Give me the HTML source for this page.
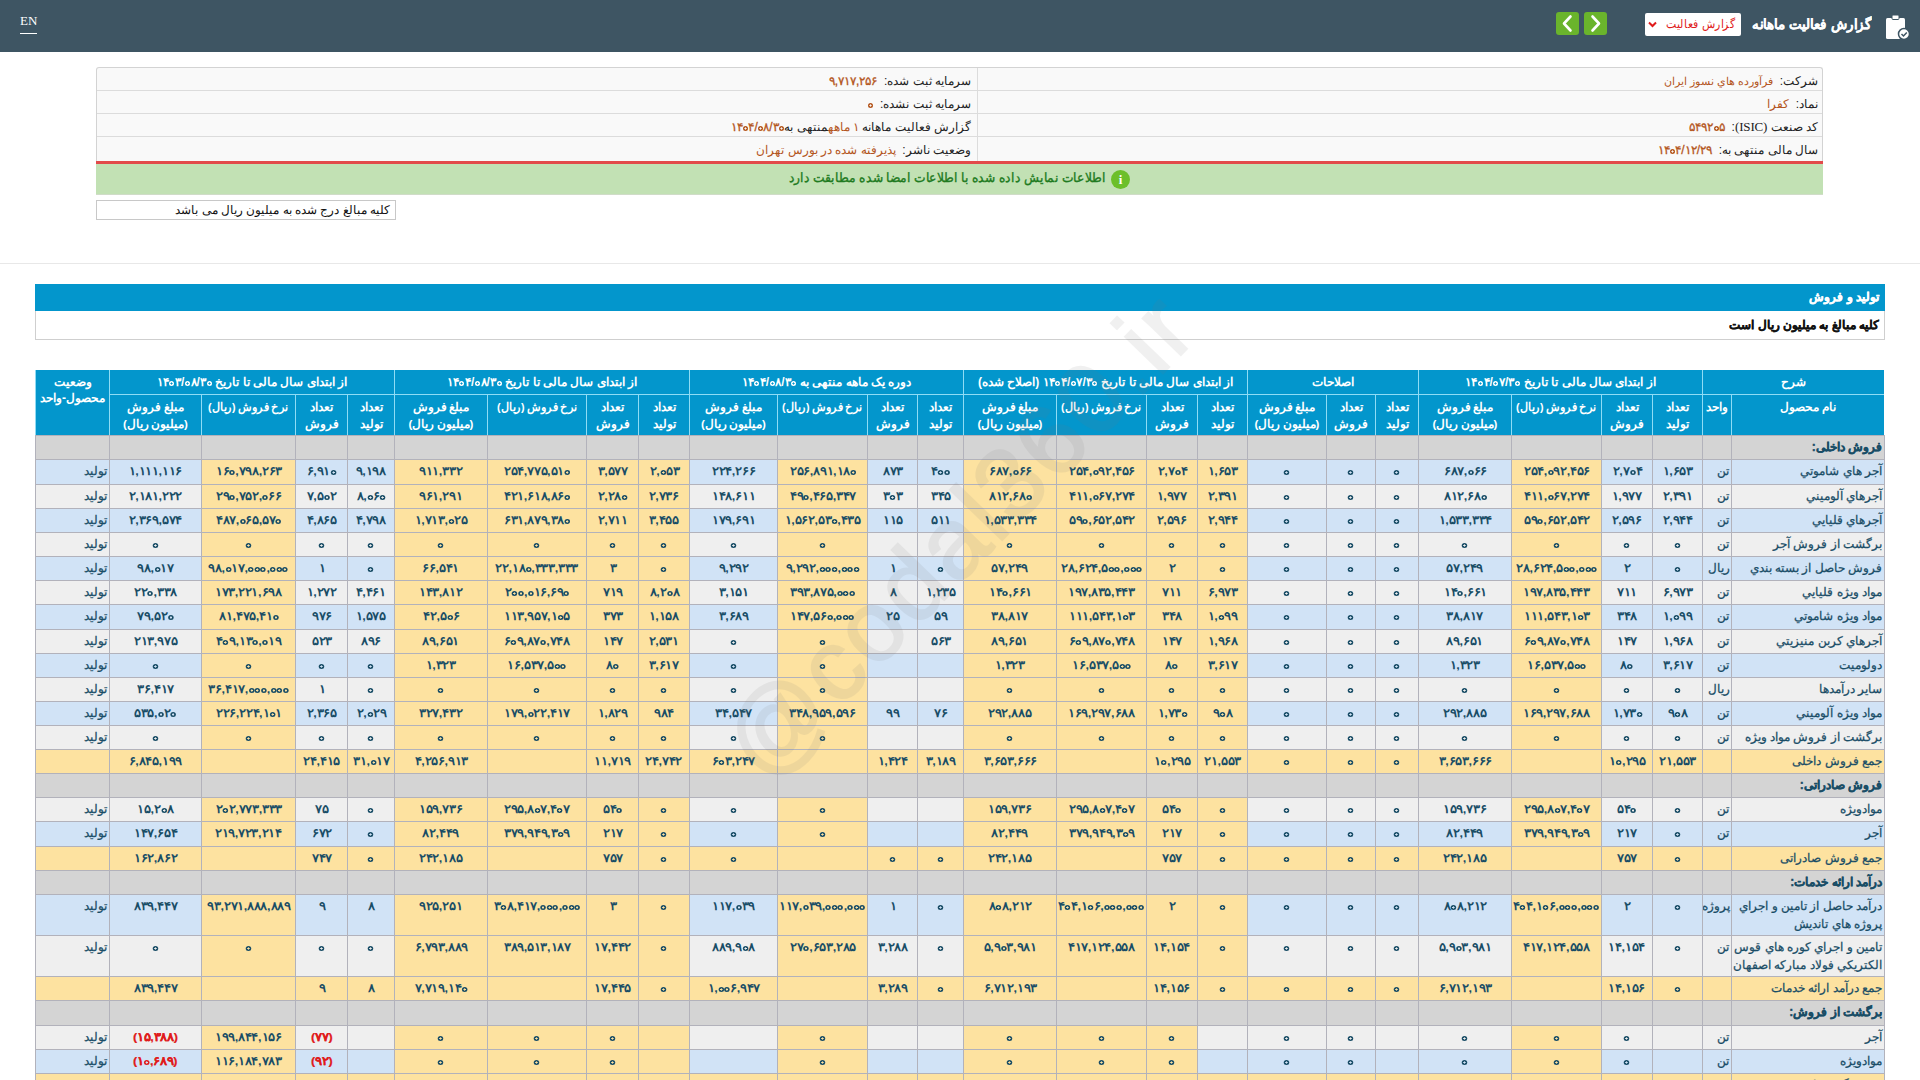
<!DOCTYPE html>
<html lang="fa">
<head>
<meta charset="utf-8">
<style>
*{box-sizing:border-box;margin:0;padding:0}
html,body{width:1920px;height:1080px;overflow:hidden;background:#fff;font-family:"Liberation Sans",sans-serif;}
.abs{position:absolute}
#top{position:absolute;left:0;top:0;width:1920px;height:52px;background:#3e5563}
#en{position:absolute;left:20px;top:14px;color:#fff;font-family:"Liberation Serif",serif;font-size:13px;line-height:14px}
#en:after{content:"";position:absolute;left:0;right:0;top:19px;height:1px;background:#fff}
.gbtn{position:absolute;top:12px;width:23px;height:23px;background:#6ab42c;border-radius:3px}
.gbtn svg{position:absolute;left:0;top:0}
#sel{position:absolute;left:1645px;top:13px;width:96px;height:23px;background:#fff;border-radius:2px;color:#e01b1b;font-size:11.5px;letter-spacing:-0.3px;line-height:23px;direction:rtl;padding-right:6px;white-space:nowrap}
#sel svg{position:absolute;left:3px;top:8px}
#ttl{position:absolute;right:48px;top:13px;color:#fff;font-size:14px;font-weight:bold;line-height:22px;direction:rtl;white-space:nowrap;transform:scaleX(0.953);transform-origin:100% 50%;-webkit-text-stroke:0.2px #fff}
#info{position:absolute;left:96px;top:67px;width:1727px;height:94px;background:#f9f9f9;border:1px solid #d3d3d3;border-bottom:none;border-radius:3px 3px 0 0}
.ir{position:absolute;left:0;width:1725px;height:1px;background:#dcdcdc}
.ivl{position:absolute;left:880px;top:0;width:1px;height:93px;background:#dcdcdc}
.it{position:absolute;direction:rtl;white-space:nowrap;font-size:12px;line-height:22px;color:#222;letter-spacing:-0.2px}
.it span{color:#b4561d}
.it .n{font-weight:normal;-webkit-text-stroke:0.3px currentColor;direction:ltr;unicode-bidi:bidi-override}
#redbar{position:absolute;left:96px;top:161px;width:1727px;height:3px;background:#e24a4a}
#alert{position:absolute;left:96px;top:164px;width:1727px;height:31px;background:#c2e1b4;border-bottom:1px solid #d0dcc8}
#alert .tx{position:absolute;right:717px;top:4px;direction:rtl;white-space:nowrap;color:#207a20;font-size:13px;transform:scaleX(0.942);transform-origin:100% 50%;font-weight:normal;-webkit-text-stroke:0.35px #207a20;line-height:20px}
#alert .ic{position:absolute;left:1015px;top:6px;width:19px;height:19px;border-radius:50%;background:#6cbf2a;color:#fff;font-size:13px;font-weight:bold;text-align:center;line-height:19px;font-family:"Liberation Serif",serif}
#note{position:absolute;left:96px;top:200px;width:300px;height:20px;border:1px solid #c8c8c8;background:#fff;direction:rtl;font-size:12px;line-height:19px;padding-right:5px;color:#111;white-space:nowrap}
#sep{position:absolute;left:0;top:263px;width:1920px;height:1px;background:#e8e8e8}
#sbar{position:absolute;left:35px;top:284px;width:1850px;height:27px;background:#0396cc;color:#fff;direction:rtl;font-size:12px;font-weight:bold;line-height:27px;padding-right:6px;-webkit-text-stroke:0.35px #fff}
#sbox{position:absolute;left:35px;top:311px;width:1850px;height:29px;background:#fff;border:1px solid #cfcfcf;border-top:none;direction:rtl;font-size:12px;font-weight:bold;line-height:28px;padding-right:5px;color:#111;-webkit-text-stroke:0.3px #111}
#tbl{position:absolute;left:0;top:0;width:1920px;height:1080px}
.h{position:absolute;background:#0396cc;border-left:1px solid #8fdcf5;border-top:1px solid #8fdcf5;color:#fff;font-weight:bold;font-size:12px;direction:rtl;text-align:center;white-space:nowrap;overflow:hidden;line-height:16px}
.h.g1{padding-top:4px;border-top:none}
.h.g2{padding-top:4px;border-top:none}
.h .ov,.it .n{unicode-bidi:bidi-override;direction:ltr}
.h i{display:inline-block;width:5px;height:5px;border-radius:50%;margin:0 0.6px;vertical-align:0.5px;background:radial-gradient(circle at center,rgba(0,0,0,0) 0.8px,#fff 1.3px)}
.h .nr{display:inline-block;transform:scaleX(0.93)}
.h.g3{padding-top:4px;font-size:11.5px;word-spacing:-1px;letter-spacing:-0.2px;line-height:16.5px}
.c{position:absolute;border-left:1px solid #b2b2bb;border-top:1px solid #b2b2bb;font-size:12px;direction:rtl;white-space:nowrap;overflow:hidden;color:#194d66;line-height:17px;padding-top:3px;font-weight:bold;text-align:center}
.c.nm{text-align:right;padding-right:2px;font-weight:normal;white-space:normal;line-height:18px;padding-top:2px;-webkit-text-stroke:0.25px currentColor}
.c.sb{font-weight:bold;-webkit-text-stroke:0.35px currentColor}
.c.un,.c.st{text-align:right;padding-right:2px;font-weight:normal;padding-top:3px;-webkit-text-stroke:0.25px currentColor}
.c.neg{color:#e01b1b;font-weight:normal;-webkit-text-stroke:0.2px currentColor}
.c.sm{letter-spacing:-0.6px;padding-right:1px}
.c.nu{direction:ltr;font-size:11.5px}
.c.nu b{display:inline-block;transform:scaleX(1.1)}
.c i,.it i{display:inline-block;width:5px;height:5px;border-radius:50%;margin:0 0.3px;vertical-align:0.5px;background:radial-gradient(circle at center,rgba(0,0,0,0) 0.8px,currentColor 1.3px)}
#tframe{position:absolute;left:35px;top:435px;width:1850px;height:720px;border-right:1px solid #b2b2bb;pointer-events:none}
#wm{position:absolute;left:645px;top:480px;font-size:100px;font-weight:normal;color:#787878;-webkit-text-stroke:2px #787878;opacity:0.1;letter-spacing:3px;transform:rotate(-46deg);white-space:nowrap;font-family:"Liberation Sans",sans-serif;line-height:110px}
</style>
</head>
<body>
<div id="top">
  <div id="en">EN</div>
  <div class="gbtn" style="left:1556px"><svg width="23" height="23" viewBox="0 0 23 23"><path d="M14.5 4.5 L8 11.5 L14.5 18.5" fill="none" stroke="#fff" stroke-width="2.6" stroke-linecap="round" stroke-linejoin="round"/></svg></div>
  <div class="gbtn" style="left:1584px"><svg width="23" height="23" viewBox="0 0 23 23"><path d="M8.5 4.5 L15 11.5 L8.5 18.5" fill="none" stroke="#fff" stroke-width="2.6" stroke-linecap="round" stroke-linejoin="round"/></svg></div>
  <div id="sel"><span style="display:inline-block;transform:scaleX(0.91);transform-origin:100% 50%">گزارش فعالیت</span><svg width="9" height="7" viewBox="0 0 9 7"><path d="M1 1.5 L4.5 5 L8 1.5" fill="none" stroke="#e01b1b" stroke-width="2"/></svg></div>
  <div id="ttl">گزارش فعالیت ماهانه</div>
  <svg class="abs" style="left:1884px;top:14px" width="26" height="26" viewBox="0 0 26 26">
    <rect x="2" y="4" width="19" height="21" rx="1.5" fill="#fff"/>
    <rect x="8" y="1" width="7" height="4.5" rx="1" fill="#fff" stroke="#3e5563" stroke-width="1"/>
    <circle cx="20" cy="20" r="5.5" fill="#fff" stroke="#3e5563" stroke-width="1.5"/>
    <path d="M17.5 20 L19.5 22 L22.8 18.5" fill="none" stroke="#3e5563" stroke-width="1.5"/>
  </svg>
</div>

<div id="info">
  <div class="ir" style="top:22px"></div>
  <div class="ir" style="top:45px"></div>
  <div class="ir" style="top:68px"></div>
  <div class="ivl"></div>
  <div class="it" style="right:4px;top:2px">شرکت:&nbsp; <span style="font-size:11px">فرآورده هاي نسوز ايران</span></div>
  <div class="it" style="right:4px;top:25px">نماد:&nbsp; <span>كفرا</span></div>
  <div class="it" style="right:4px;top:48px">کد صنعت <b style="font-family:'Liberation Serif',serif;font-weight:normal;font-size:13px">(ISIC)</b>:&nbsp; <span class="n">۵۴۹۲<i></i>۵</span></div>
  <div class="it" style="right:4px;top:71px">سال مالی منتهی به:&nbsp; <span class="n">۱۴<i></i>۴/۱۲/۲۹</span></div>
  <div class="it" style="right:851px;top:2px">سرمایه ثبت شده:&nbsp; <span class="n">۹,۷۱۷,۲۵۶</span></div>
  <div class="it" style="right:851px;top:25px">سرمایه ثبت نشده:&nbsp; <span class="n"><i></i></span></div>
  <div class="it" style="right:851px;top:48px">گزارش فعالیت ماهانه <span>۱ ماهه</span>منتهی به<span class="n">۱۴<i></i>۴/<i></i>۸/۳<i></i></span></div>
  <div class="it" style="right:851px;top:71px">وضعیت ناشر:&nbsp; <span>پذیرفته شده در بورس تهران</span></div>
</div>
<div id="redbar"></div>
<div id="alert"><div class="tx">اطلاعات نمایش داده شده با اطلاعات امضا شده مطابقت دارد</div><div class="ic">i</div></div>
<div id="note">کلیه مبالغ درج شده به میلیون ریال می باشد</div>
<div id="sep"></div>
<div id="sbar">تولید و فروش</div>
<div id="sbox">کلیه مبالغ به میلیون ریال است</div>

<div id="tbl">
<div class="h g1" style="left:1702px;top:370px;width:182px;height:24px">شرح</div>
<div class="h g1" style="left:1418px;top:370px;width:284px;height:24px">از ابتدای سال مالی تا تاریخ <span class="ov">۱۴<i></i>۴/<i></i>۷/۳<i></i></span></div>
<div class="h g1" style="left:1247px;top:370px;width:171px;height:24px">اصلاحات</div>
<div class="h g1" style="left:963px;top:370px;width:284px;height:24px">از ابتدای سال مالی تا تاریخ <span class="ov">۱۴<i></i>۴/<i></i>۷/۳<i></i></span> (اصلاح شده)</div>
<div class="h g1" style="left:689px;top:370px;width:274px;height:24px">دوره یک ماهه منتهی به <span class="ov">۱۴<i></i>۴/<i></i>۸/۳<i></i></span></div>
<div class="h g1" style="left:394px;top:370px;width:295px;height:24px">از ابتدای سال مالی تا تاریخ <span class="ov">۱۴<i></i>۴/<i></i>۸/۳<i></i></span></div>
<div class="h g1" style="left:109px;top:370px;width:285px;height:24px">از ابتدای سال مالی تا تاریخ <span class="ov">۱۴<i></i>۳/<i></i>۸/۳<i></i></span></div>
<div class="h g2" style="left:35px;top:370px;width:74px;height:65px">وضعیت<br>محصول-واحد</div>
<div class="h g3" style="left:1731px;top:394px;width:153px;height:41px">نام محصول</div>
<div class="h g3" style="left:1702px;top:394px;width:29px;height:41px">واحد</div>
<div class="h g3" style="left:1652px;top:394px;width:50px;height:41px">تعداد<br>تولید</div>
<div class="h g3" style="left:1601px;top:394px;width:51px;height:41px">تعداد<br>فروش</div>
<div class="h g3" style="left:1511px;top:394px;width:90px;height:41px"><span class="nr">نرخ فروش (ریال)</span></div>
<div class="h g3" style="left:1418px;top:394px;width:93px;height:41px">مبلغ فروش<br>(میلیون ریال)</div>
<div class="h g3" style="left:1375px;top:394px;width:43px;height:41px">تعداد<br>تولید</div>
<div class="h g3" style="left:1326px;top:394px;width:49px;height:41px">تعداد<br>فروش</div>
<div class="h g3" style="left:1247px;top:394px;width:79px;height:41px">مبلغ فروش<br>(میلیون ریال)</div>
<div class="h g3" style="left:1197px;top:394px;width:50px;height:41px">تعداد<br>تولید</div>
<div class="h g3" style="left:1146px;top:394px;width:51px;height:41px">تعداد<br>فروش</div>
<div class="h g3" style="left:1056px;top:394px;width:90px;height:41px"><span class="nr">نرخ فروش (ریال)</span></div>
<div class="h g3" style="left:963px;top:394px;width:93px;height:41px">مبلغ فروش<br>(میلیون ریال)</div>
<div class="h g3" style="left:917px;top:394px;width:46px;height:41px">تعداد<br>تولید</div>
<div class="h g3" style="left:867px;top:394px;width:50px;height:41px">تعداد<br>فروش</div>
<div class="h g3" style="left:777px;top:394px;width:90px;height:41px"><span class="nr">نرخ فروش (ریال)</span></div>
<div class="h g3" style="left:689px;top:394px;width:88px;height:41px">مبلغ فروش<br>(میلیون ریال)</div>
<div class="h g3" style="left:638px;top:394px;width:51px;height:41px">تعداد<br>تولید</div>
<div class="h g3" style="left:586px;top:394px;width:52px;height:41px">تعداد<br>فروش</div>
<div class="h g3" style="left:487px;top:394px;width:99px;height:41px"><span class="nr">نرخ فروش (ریال)</span></div>
<div class="h g3" style="left:394px;top:394px;width:93px;height:41px">مبلغ فروش<br>(میلیون ریال)</div>
<div class="h g3" style="left:347px;top:394px;width:47px;height:41px">تعداد<br>تولید</div>
<div class="h g3" style="left:295px;top:394px;width:52px;height:41px">تعداد<br>فروش</div>
<div class="h g3" style="left:201px;top:394px;width:94px;height:41px"><span class="nr">نرخ فروش (ریال)</span></div>
<div class="h g3" style="left:109px;top:394px;width:92px;height:41px">مبلغ فروش<br>(میلیون ریال)</div>
<div class="c nm sb" style="left:1731px;top:435px;width:153px;height:24px;background:#d4d4d4">فروش داخلی:</div>
<div class="c " style="left:1702px;top:435px;width:29px;height:24px;background:#d4d4d4"></div>
<div class="c " style="left:1652px;top:435px;width:50px;height:24px;background:#d4d4d4"></div>
<div class="c " style="left:1601px;top:435px;width:51px;height:24px;background:#d4d4d4"></div>
<div class="c " style="left:1511px;top:435px;width:90px;height:24px;background:#d4d4d4"></div>
<div class="c " style="left:1418px;top:435px;width:93px;height:24px;background:#d4d4d4"></div>
<div class="c " style="left:1375px;top:435px;width:43px;height:24px;background:#d4d4d4"></div>
<div class="c " style="left:1326px;top:435px;width:49px;height:24px;background:#d4d4d4"></div>
<div class="c " style="left:1247px;top:435px;width:79px;height:24px;background:#d4d4d4"></div>
<div class="c " style="left:1197px;top:435px;width:50px;height:24px;background:#d4d4d4"></div>
<div class="c " style="left:1146px;top:435px;width:51px;height:24px;background:#d4d4d4"></div>
<div class="c " style="left:1056px;top:435px;width:90px;height:24px;background:#d4d4d4"></div>
<div class="c " style="left:963px;top:435px;width:93px;height:24px;background:#d4d4d4"></div>
<div class="c " style="left:917px;top:435px;width:46px;height:24px;background:#d4d4d4"></div>
<div class="c " style="left:867px;top:435px;width:50px;height:24px;background:#d4d4d4"></div>
<div class="c " style="left:777px;top:435px;width:90px;height:24px;background:#d4d4d4"></div>
<div class="c " style="left:689px;top:435px;width:88px;height:24px;background:#d4d4d4"></div>
<div class="c " style="left:638px;top:435px;width:51px;height:24px;background:#d4d4d4"></div>
<div class="c " style="left:586px;top:435px;width:52px;height:24px;background:#d4d4d4"></div>
<div class="c " style="left:487px;top:435px;width:99px;height:24px;background:#d4d4d4"></div>
<div class="c " style="left:394px;top:435px;width:93px;height:24px;background:#d4d4d4"></div>
<div class="c " style="left:347px;top:435px;width:47px;height:24px;background:#d4d4d4"></div>
<div class="c " style="left:295px;top:435px;width:52px;height:24px;background:#d4d4d4"></div>
<div class="c " style="left:201px;top:435px;width:94px;height:24px;background:#d4d4d4"></div>
<div class="c " style="left:109px;top:435px;width:92px;height:24px;background:#d4d4d4"></div>
<div class="c " style="left:35px;top:435px;width:74px;height:24px;background:#d4d4d4"></div>
<div class="c nm" style="left:1731px;top:459px;width:153px;height:25px;background:#d1e3f6">آجر هاي شاموتي</div>
<div class="c un" style="left:1702px;top:459px;width:29px;height:25px;background:#d1e3f6">تن</div>
<div class="c nu" style="left:1652px;top:459px;width:50px;height:25px;background:#d1e3f6"><b>۱,۶۵۳</b></div>
<div class="c nu" style="left:1601px;top:459px;width:51px;height:25px;background:#d1e3f6"><b>۲,۷<i></i>۴</b></div>
<div class="c nu" style="left:1511px;top:459px;width:90px;height:25px;background:#fde2a0"><b>۲۵۴,<i></i>۹۲,۴۵۶</b></div>
<div class="c nu" style="left:1418px;top:459px;width:93px;height:25px;background:#d1e3f6"><b>۶۸۷,<i></i>۶۶</b></div>
<div class="c nu" style="left:1375px;top:459px;width:43px;height:25px;background:#d1e3f6"><b><i></i></b></div>
<div class="c nu" style="left:1326px;top:459px;width:49px;height:25px;background:#d1e3f6"><b><i></i></b></div>
<div class="c nu" style="left:1247px;top:459px;width:79px;height:25px;background:#d1e3f6"><b><i></i></b></div>
<div class="c nu" style="left:1197px;top:459px;width:50px;height:25px;background:#fde2a0"><b>۱,۶۵۳</b></div>
<div class="c nu" style="left:1146px;top:459px;width:51px;height:25px;background:#fde2a0"><b>۲,۷<i></i>۴</b></div>
<div class="c nu" style="left:1056px;top:459px;width:90px;height:25px;background:#fde2a0"><b>۲۵۴,<i></i>۹۲,۴۵۶</b></div>
<div class="c nu" style="left:963px;top:459px;width:93px;height:25px;background:#fde2a0"><b>۶۸۷,<i></i>۶۶</b></div>
<div class="c nu" style="left:917px;top:459px;width:46px;height:25px;background:#d1e3f6"><b>۴<i></i><i></i></b></div>
<div class="c nu" style="left:867px;top:459px;width:50px;height:25px;background:#d1e3f6"><b>۸۷۳</b></div>
<div class="c nu" style="left:777px;top:459px;width:90px;height:25px;background:#fde2a0"><b>۲۵۶,۸۹۱,۱۸<i></i></b></div>
<div class="c nu" style="left:689px;top:459px;width:88px;height:25px;background:#d1e3f6"><b>۲۲۴,۲۶۶</b></div>
<div class="c nu" style="left:638px;top:459px;width:51px;height:25px;background:#fde2a0"><b>۲,<i></i>۵۳</b></div>
<div class="c nu" style="left:586px;top:459px;width:52px;height:25px;background:#fde2a0"><b>۳,۵۷۷</b></div>
<div class="c nu" style="left:487px;top:459px;width:99px;height:25px;background:#fde2a0"><b>۲۵۴,۷۷۵,۵۱<i></i></b></div>
<div class="c nu" style="left:394px;top:459px;width:93px;height:25px;background:#fde2a0"><b>۹۱۱,۳۳۲</b></div>
<div class="c nu" style="left:347px;top:459px;width:47px;height:25px;background:#d1e3f6"><b>۹,۱۹۸</b></div>
<div class="c nu" style="left:295px;top:459px;width:52px;height:25px;background:#d1e3f6"><b>۶,۹۱<i></i></b></div>
<div class="c nu" style="left:201px;top:459px;width:94px;height:25px;background:#fde2a0"><b>۱۶<i></i>,۷۹۸,۲۶۳</b></div>
<div class="c nu" style="left:109px;top:459px;width:92px;height:25px;background:#d1e3f6"><b>۱,۱۱۱,۱۱۶</b></div>
<div class="c st" style="left:35px;top:459px;width:74px;height:25px;background:#d1e3f6">تولید</div>
<div class="c nm" style="left:1731px;top:484px;width:153px;height:24px;background:#efefef">آجرهاي آلوميني</div>
<div class="c un" style="left:1702px;top:484px;width:29px;height:24px;background:#efefef">تن</div>
<div class="c nu" style="left:1652px;top:484px;width:50px;height:24px;background:#efefef"><b>۲,۳۹۱</b></div>
<div class="c nu" style="left:1601px;top:484px;width:51px;height:24px;background:#efefef"><b>۱,۹۷۷</b></div>
<div class="c nu" style="left:1511px;top:484px;width:90px;height:24px;background:#fde2a0"><b>۴۱۱,<i></i>۶۷,۲۷۴</b></div>
<div class="c nu" style="left:1418px;top:484px;width:93px;height:24px;background:#efefef"><b>۸۱۲,۶۸<i></i></b></div>
<div class="c nu" style="left:1375px;top:484px;width:43px;height:24px;background:#efefef"><b><i></i></b></div>
<div class="c nu" style="left:1326px;top:484px;width:49px;height:24px;background:#efefef"><b><i></i></b></div>
<div class="c nu" style="left:1247px;top:484px;width:79px;height:24px;background:#efefef"><b><i></i></b></div>
<div class="c nu" style="left:1197px;top:484px;width:50px;height:24px;background:#fde2a0"><b>۲,۳۹۱</b></div>
<div class="c nu" style="left:1146px;top:484px;width:51px;height:24px;background:#fde2a0"><b>۱,۹۷۷</b></div>
<div class="c nu" style="left:1056px;top:484px;width:90px;height:24px;background:#fde2a0"><b>۴۱۱,<i></i>۶۷,۲۷۴</b></div>
<div class="c nu" style="left:963px;top:484px;width:93px;height:24px;background:#fde2a0"><b>۸۱۲,۶۸<i></i></b></div>
<div class="c nu" style="left:917px;top:484px;width:46px;height:24px;background:#efefef"><b>۳۴۵</b></div>
<div class="c nu" style="left:867px;top:484px;width:50px;height:24px;background:#efefef"><b>۳<i></i>۳</b></div>
<div class="c nu" style="left:777px;top:484px;width:90px;height:24px;background:#fde2a0"><b>۴۹<i></i>,۴۶۵,۳۴۷</b></div>
<div class="c nu" style="left:689px;top:484px;width:88px;height:24px;background:#efefef"><b>۱۴۸,۶۱۱</b></div>
<div class="c nu" style="left:638px;top:484px;width:51px;height:24px;background:#fde2a0"><b>۲,۷۳۶</b></div>
<div class="c nu" style="left:586px;top:484px;width:52px;height:24px;background:#fde2a0"><b>۲,۲۸<i></i></b></div>
<div class="c nu" style="left:487px;top:484px;width:99px;height:24px;background:#fde2a0"><b>۴۲۱,۶۱۸,۸۶<i></i></b></div>
<div class="c nu" style="left:394px;top:484px;width:93px;height:24px;background:#fde2a0"><b>۹۶۱,۲۹۱</b></div>
<div class="c nu" style="left:347px;top:484px;width:47px;height:24px;background:#efefef"><b>۸,<i></i>۶<i></i></b></div>
<div class="c nu" style="left:295px;top:484px;width:52px;height:24px;background:#efefef"><b>۷,۵<i></i>۲</b></div>
<div class="c nu" style="left:201px;top:484px;width:94px;height:24px;background:#fde2a0"><b>۲۹<i></i>,۷۵۲,<i></i>۶۶</b></div>
<div class="c nu" style="left:109px;top:484px;width:92px;height:24px;background:#efefef"><b>۲,۱۸۱,۲۲۲</b></div>
<div class="c st" style="left:35px;top:484px;width:74px;height:24px;background:#efefef">تولید</div>
<div class="c nm" style="left:1731px;top:508px;width:153px;height:24px;background:#d1e3f6">آجرهاي قليايي</div>
<div class="c un" style="left:1702px;top:508px;width:29px;height:24px;background:#d1e3f6">تن</div>
<div class="c nu" style="left:1652px;top:508px;width:50px;height:24px;background:#d1e3f6"><b>۲,۹۴۴</b></div>
<div class="c nu" style="left:1601px;top:508px;width:51px;height:24px;background:#d1e3f6"><b>۲,۵۹۶</b></div>
<div class="c nu" style="left:1511px;top:508px;width:90px;height:24px;background:#fde2a0"><b>۵۹<i></i>,۶۵۲,۵۴۲</b></div>
<div class="c nu" style="left:1418px;top:508px;width:93px;height:24px;background:#d1e3f6"><b>۱,۵۳۳,۳۳۴</b></div>
<div class="c nu" style="left:1375px;top:508px;width:43px;height:24px;background:#d1e3f6"><b><i></i></b></div>
<div class="c nu" style="left:1326px;top:508px;width:49px;height:24px;background:#d1e3f6"><b><i></i></b></div>
<div class="c nu" style="left:1247px;top:508px;width:79px;height:24px;background:#d1e3f6"><b><i></i></b></div>
<div class="c nu" style="left:1197px;top:508px;width:50px;height:24px;background:#fde2a0"><b>۲,۹۴۴</b></div>
<div class="c nu" style="left:1146px;top:508px;width:51px;height:24px;background:#fde2a0"><b>۲,۵۹۶</b></div>
<div class="c nu" style="left:1056px;top:508px;width:90px;height:24px;background:#fde2a0"><b>۵۹<i></i>,۶۵۲,۵۴۲</b></div>
<div class="c nu" style="left:963px;top:508px;width:93px;height:24px;background:#fde2a0"><b>۱,۵۳۳,۳۳۴</b></div>
<div class="c nu" style="left:917px;top:508px;width:46px;height:24px;background:#d1e3f6"><b>۵۱۱</b></div>
<div class="c nu" style="left:867px;top:508px;width:50px;height:24px;background:#d1e3f6"><b>۱۱۵</b></div>
<div class="c nu" style="left:777px;top:508px;width:90px;height:24px;background:#fde2a0"><b>۱,۵۶۲,۵۳<i></i>,۴۳۵</b></div>
<div class="c nu" style="left:689px;top:508px;width:88px;height:24px;background:#d1e3f6"><b>۱۷۹,۶۹۱</b></div>
<div class="c nu" style="left:638px;top:508px;width:51px;height:24px;background:#fde2a0"><b>۳,۴۵۵</b></div>
<div class="c nu" style="left:586px;top:508px;width:52px;height:24px;background:#fde2a0"><b>۲,۷۱۱</b></div>
<div class="c nu" style="left:487px;top:508px;width:99px;height:24px;background:#fde2a0"><b>۶۳۱,۸۷۹,۳۸<i></i></b></div>
<div class="c nu" style="left:394px;top:508px;width:93px;height:24px;background:#fde2a0"><b>۱,۷۱۳,<i></i>۲۵</b></div>
<div class="c nu" style="left:347px;top:508px;width:47px;height:24px;background:#d1e3f6"><b>۴,۷۹۸</b></div>
<div class="c nu" style="left:295px;top:508px;width:52px;height:24px;background:#d1e3f6"><b>۴,۸۶۵</b></div>
<div class="c nu" style="left:201px;top:508px;width:94px;height:24px;background:#fde2a0"><b>۴۸۷,<i></i>۶۵,۵۷<i></i></b></div>
<div class="c nu" style="left:109px;top:508px;width:92px;height:24px;background:#d1e3f6"><b>۲,۳۶۹,۵۷۴</b></div>
<div class="c st" style="left:35px;top:508px;width:74px;height:24px;background:#d1e3f6">تولید</div>
<div class="c nm" style="left:1731px;top:532px;width:153px;height:24px;background:#efefef">برگشت از فروش آجر</div>
<div class="c un" style="left:1702px;top:532px;width:29px;height:24px;background:#efefef">تن</div>
<div class="c nu" style="left:1652px;top:532px;width:50px;height:24px;background:#efefef"><b><i></i></b></div>
<div class="c nu" style="left:1601px;top:532px;width:51px;height:24px;background:#efefef"><b><i></i></b></div>
<div class="c nu" style="left:1511px;top:532px;width:90px;height:24px;background:#fde2a0"><b><i></i></b></div>
<div class="c nu" style="left:1418px;top:532px;width:93px;height:24px;background:#efefef"><b><i></i></b></div>
<div class="c nu" style="left:1375px;top:532px;width:43px;height:24px;background:#efefef"><b><i></i></b></div>
<div class="c nu" style="left:1326px;top:532px;width:49px;height:24px;background:#efefef"><b><i></i></b></div>
<div class="c nu" style="left:1247px;top:532px;width:79px;height:24px;background:#efefef"><b><i></i></b></div>
<div class="c nu" style="left:1197px;top:532px;width:50px;height:24px;background:#fde2a0"><b><i></i></b></div>
<div class="c nu" style="left:1146px;top:532px;width:51px;height:24px;background:#fde2a0"><b><i></i></b></div>
<div class="c nu" style="left:1056px;top:532px;width:90px;height:24px;background:#fde2a0"><b><i></i></b></div>
<div class="c nu" style="left:963px;top:532px;width:93px;height:24px;background:#fde2a0"><b><i></i></b></div>
<div class="c nu" style="left:917px;top:532px;width:46px;height:24px;background:#efefef"></div>
<div class="c nu" style="left:867px;top:532px;width:50px;height:24px;background:#efefef"></div>
<div class="c nu" style="left:777px;top:532px;width:90px;height:24px;background:#fde2a0"><b><i></i></b></div>
<div class="c nu" style="left:689px;top:532px;width:88px;height:24px;background:#efefef"><b><i></i></b></div>
<div class="c nu" style="left:638px;top:532px;width:51px;height:24px;background:#fde2a0"><b><i></i></b></div>
<div class="c nu" style="left:586px;top:532px;width:52px;height:24px;background:#fde2a0"><b><i></i></b></div>
<div class="c nu" style="left:487px;top:532px;width:99px;height:24px;background:#fde2a0"><b><i></i></b></div>
<div class="c nu" style="left:394px;top:532px;width:93px;height:24px;background:#fde2a0"><b><i></i></b></div>
<div class="c nu" style="left:347px;top:532px;width:47px;height:24px;background:#efefef"><b><i></i></b></div>
<div class="c nu" style="left:295px;top:532px;width:52px;height:24px;background:#efefef"><b><i></i></b></div>
<div class="c nu" style="left:201px;top:532px;width:94px;height:24px;background:#fde2a0"><b><i></i></b></div>
<div class="c nu" style="left:109px;top:532px;width:92px;height:24px;background:#efefef"><b><i></i></b></div>
<div class="c st" style="left:35px;top:532px;width:74px;height:24px;background:#efefef">تولید</div>
<div class="c nm" style="left:1731px;top:556px;width:153px;height:24px;background:#d1e3f6">فروش حاصل از بسته بندي</div>
<div class="c un sm" style="left:1702px;top:556px;width:29px;height:24px;background:#d1e3f6">ريال</div>
<div class="c nu" style="left:1652px;top:556px;width:50px;height:24px;background:#d1e3f6"><b><i></i></b></div>
<div class="c nu" style="left:1601px;top:556px;width:51px;height:24px;background:#d1e3f6"><b>۲</b></div>
<div class="c nu" style="left:1511px;top:556px;width:90px;height:24px;background:#fde2a0"><b>۲۸,۶۲۴,۵<i></i><i></i>,<i></i><i></i><i></i></b></div>
<div class="c nu" style="left:1418px;top:556px;width:93px;height:24px;background:#d1e3f6"><b>۵۷,۲۴۹</b></div>
<div class="c nu" style="left:1375px;top:556px;width:43px;height:24px;background:#d1e3f6"><b><i></i></b></div>
<div class="c nu" style="left:1326px;top:556px;width:49px;height:24px;background:#d1e3f6"><b><i></i></b></div>
<div class="c nu" style="left:1247px;top:556px;width:79px;height:24px;background:#d1e3f6"><b><i></i></b></div>
<div class="c nu" style="left:1197px;top:556px;width:50px;height:24px;background:#fde2a0"><b><i></i></b></div>
<div class="c nu" style="left:1146px;top:556px;width:51px;height:24px;background:#fde2a0"><b>۲</b></div>
<div class="c nu" style="left:1056px;top:556px;width:90px;height:24px;background:#fde2a0"><b>۲۸,۶۲۴,۵<i></i><i></i>,<i></i><i></i><i></i></b></div>
<div class="c nu" style="left:963px;top:556px;width:93px;height:24px;background:#fde2a0"><b>۵۷,۲۴۹</b></div>
<div class="c nu" style="left:917px;top:556px;width:46px;height:24px;background:#d1e3f6"><b><i></i></b></div>
<div class="c nu" style="left:867px;top:556px;width:50px;height:24px;background:#d1e3f6"><b>۱</b></div>
<div class="c nu" style="left:777px;top:556px;width:90px;height:24px;background:#fde2a0"><b>۹,۲۹۲,<i></i><i></i><i></i>,<i></i><i></i><i></i></b></div>
<div class="c nu" style="left:689px;top:556px;width:88px;height:24px;background:#d1e3f6"><b>۹,۲۹۲</b></div>
<div class="c nu" style="left:638px;top:556px;width:51px;height:24px;background:#fde2a0"><b><i></i></b></div>
<div class="c nu" style="left:586px;top:556px;width:52px;height:24px;background:#fde2a0"><b>۳</b></div>
<div class="c nu" style="left:487px;top:556px;width:99px;height:24px;background:#fde2a0"><b>۲۲,۱۸<i></i>,۳۳۳,۳۳۳</b></div>
<div class="c nu" style="left:394px;top:556px;width:93px;height:24px;background:#fde2a0"><b>۶۶,۵۴۱</b></div>
<div class="c nu" style="left:347px;top:556px;width:47px;height:24px;background:#d1e3f6"><b><i></i></b></div>
<div class="c nu" style="left:295px;top:556px;width:52px;height:24px;background:#d1e3f6"><b>۱</b></div>
<div class="c nu" style="left:201px;top:556px;width:94px;height:24px;background:#fde2a0"><b>۹۸,<i></i>۱۷,<i></i><i></i><i></i>,<i></i><i></i><i></i></b></div>
<div class="c nu" style="left:109px;top:556px;width:92px;height:24px;background:#d1e3f6"><b>۹۸,<i></i>۱۷</b></div>
<div class="c st" style="left:35px;top:556px;width:74px;height:24px;background:#d1e3f6">تولید</div>
<div class="c nm" style="left:1731px;top:580px;width:153px;height:24px;background:#efefef">مواد ويژه قليايي</div>
<div class="c un" style="left:1702px;top:580px;width:29px;height:24px;background:#efefef">تن</div>
<div class="c nu" style="left:1652px;top:580px;width:50px;height:24px;background:#efefef"><b>۶,۹۷۳</b></div>
<div class="c nu" style="left:1601px;top:580px;width:51px;height:24px;background:#efefef"><b>۷۱۱</b></div>
<div class="c nu" style="left:1511px;top:580px;width:90px;height:24px;background:#fde2a0"><b>۱۹۷,۸۳۵,۴۴۳</b></div>
<div class="c nu" style="left:1418px;top:580px;width:93px;height:24px;background:#efefef"><b>۱۴<i></i>,۶۶۱</b></div>
<div class="c nu" style="left:1375px;top:580px;width:43px;height:24px;background:#efefef"><b><i></i></b></div>
<div class="c nu" style="left:1326px;top:580px;width:49px;height:24px;background:#efefef"><b><i></i></b></div>
<div class="c nu" style="left:1247px;top:580px;width:79px;height:24px;background:#efefef"><b><i></i></b></div>
<div class="c nu" style="left:1197px;top:580px;width:50px;height:24px;background:#fde2a0"><b>۶,۹۷۳</b></div>
<div class="c nu" style="left:1146px;top:580px;width:51px;height:24px;background:#fde2a0"><b>۷۱۱</b></div>
<div class="c nu" style="left:1056px;top:580px;width:90px;height:24px;background:#fde2a0"><b>۱۹۷,۸۳۵,۴۴۳</b></div>
<div class="c nu" style="left:963px;top:580px;width:93px;height:24px;background:#fde2a0"><b>۱۴<i></i>,۶۶۱</b></div>
<div class="c nu" style="left:917px;top:580px;width:46px;height:24px;background:#efefef"><b>۱,۲۳۵</b></div>
<div class="c nu" style="left:867px;top:580px;width:50px;height:24px;background:#efefef"><b>۸</b></div>
<div class="c nu" style="left:777px;top:580px;width:90px;height:24px;background:#fde2a0"><b>۳۹۳,۸۷۵,<i></i><i></i><i></i></b></div>
<div class="c nu" style="left:689px;top:580px;width:88px;height:24px;background:#efefef"><b>۳,۱۵۱</b></div>
<div class="c nu" style="left:638px;top:580px;width:51px;height:24px;background:#fde2a0"><b>۸,۲<i></i>۸</b></div>
<div class="c nu" style="left:586px;top:580px;width:52px;height:24px;background:#fde2a0"><b>۷۱۹</b></div>
<div class="c nu" style="left:487px;top:580px;width:99px;height:24px;background:#fde2a0"><b>۲<i></i><i></i>,<i></i>۱۶,۶۹<i></i></b></div>
<div class="c nu" style="left:394px;top:580px;width:93px;height:24px;background:#fde2a0"><b>۱۴۳,۸۱۲</b></div>
<div class="c nu" style="left:347px;top:580px;width:47px;height:24px;background:#efefef"><b>۴,۴۶۱</b></div>
<div class="c nu" style="left:295px;top:580px;width:52px;height:24px;background:#efefef"><b>۱,۲۷۲</b></div>
<div class="c nu" style="left:201px;top:580px;width:94px;height:24px;background:#fde2a0"><b>۱۷۳,۲۲۱,۶۹۸</b></div>
<div class="c nu" style="left:109px;top:580px;width:92px;height:24px;background:#efefef"><b>۲۲<i></i>,۳۳۸</b></div>
<div class="c st" style="left:35px;top:580px;width:74px;height:24px;background:#efefef">تولید</div>
<div class="c nm" style="left:1731px;top:604px;width:153px;height:25px;background:#d1e3f6">مواد ويژه شاموتي</div>
<div class="c un" style="left:1702px;top:604px;width:29px;height:25px;background:#d1e3f6">تن</div>
<div class="c nu" style="left:1652px;top:604px;width:50px;height:25px;background:#d1e3f6"><b>۱,<i></i>۹۹</b></div>
<div class="c nu" style="left:1601px;top:604px;width:51px;height:25px;background:#d1e3f6"><b>۳۴۸</b></div>
<div class="c nu" style="left:1511px;top:604px;width:90px;height:25px;background:#fde2a0"><b>۱۱۱,۵۴۳,۱<i></i>۳</b></div>
<div class="c nu" style="left:1418px;top:604px;width:93px;height:25px;background:#d1e3f6"><b>۳۸,۸۱۷</b></div>
<div class="c nu" style="left:1375px;top:604px;width:43px;height:25px;background:#d1e3f6"><b><i></i></b></div>
<div class="c nu" style="left:1326px;top:604px;width:49px;height:25px;background:#d1e3f6"><b><i></i></b></div>
<div class="c nu" style="left:1247px;top:604px;width:79px;height:25px;background:#d1e3f6"><b><i></i></b></div>
<div class="c nu" style="left:1197px;top:604px;width:50px;height:25px;background:#fde2a0"><b>۱,<i></i>۹۹</b></div>
<div class="c nu" style="left:1146px;top:604px;width:51px;height:25px;background:#fde2a0"><b>۳۴۸</b></div>
<div class="c nu" style="left:1056px;top:604px;width:90px;height:25px;background:#fde2a0"><b>۱۱۱,۵۴۳,۱<i></i>۳</b></div>
<div class="c nu" style="left:963px;top:604px;width:93px;height:25px;background:#fde2a0"><b>۳۸,۸۱۷</b></div>
<div class="c nu" style="left:917px;top:604px;width:46px;height:25px;background:#d1e3f6"><b>۵۹</b></div>
<div class="c nu" style="left:867px;top:604px;width:50px;height:25px;background:#d1e3f6"><b>۲۵</b></div>
<div class="c nu" style="left:777px;top:604px;width:90px;height:25px;background:#fde2a0"><b>۱۴۷,۵۶<i></i>,<i></i><i></i><i></i></b></div>
<div class="c nu" style="left:689px;top:604px;width:88px;height:25px;background:#d1e3f6"><b>۳,۶۸۹</b></div>
<div class="c nu" style="left:638px;top:604px;width:51px;height:25px;background:#fde2a0"><b>۱,۱۵۸</b></div>
<div class="c nu" style="left:586px;top:604px;width:52px;height:25px;background:#fde2a0"><b>۳۷۳</b></div>
<div class="c nu" style="left:487px;top:604px;width:99px;height:25px;background:#fde2a0"><b>۱۱۳,۹۵۷,۱<i></i>۵</b></div>
<div class="c nu" style="left:394px;top:604px;width:93px;height:25px;background:#fde2a0"><b>۴۲,۵<i></i>۶</b></div>
<div class="c nu" style="left:347px;top:604px;width:47px;height:25px;background:#d1e3f6"><b>۱,۵۷۵</b></div>
<div class="c nu" style="left:295px;top:604px;width:52px;height:25px;background:#d1e3f6"><b>۹۷۶</b></div>
<div class="c nu" style="left:201px;top:604px;width:94px;height:25px;background:#fde2a0"><b>۸۱,۴۷۵,۴۱<i></i></b></div>
<div class="c nu" style="left:109px;top:604px;width:92px;height:25px;background:#d1e3f6"><b>۷۹,۵۲<i></i></b></div>
<div class="c st" style="left:35px;top:604px;width:74px;height:25px;background:#d1e3f6">تولید</div>
<div class="c nm" style="left:1731px;top:629px;width:153px;height:24px;background:#efefef">آجرهاي كربن منيزيتي</div>
<div class="c un" style="left:1702px;top:629px;width:29px;height:24px;background:#efefef">تن</div>
<div class="c nu" style="left:1652px;top:629px;width:50px;height:24px;background:#efefef"><b>۱,۹۶۸</b></div>
<div class="c nu" style="left:1601px;top:629px;width:51px;height:24px;background:#efefef"><b>۱۴۷</b></div>
<div class="c nu" style="left:1511px;top:629px;width:90px;height:24px;background:#fde2a0"><b>۶<i></i>۹,۸۷<i></i>,۷۴۸</b></div>
<div class="c nu" style="left:1418px;top:629px;width:93px;height:24px;background:#efefef"><b>۸۹,۶۵۱</b></div>
<div class="c nu" style="left:1375px;top:629px;width:43px;height:24px;background:#efefef"><b><i></i></b></div>
<div class="c nu" style="left:1326px;top:629px;width:49px;height:24px;background:#efefef"><b><i></i></b></div>
<div class="c nu" style="left:1247px;top:629px;width:79px;height:24px;background:#efefef"><b><i></i></b></div>
<div class="c nu" style="left:1197px;top:629px;width:50px;height:24px;background:#fde2a0"><b>۱,۹۶۸</b></div>
<div class="c nu" style="left:1146px;top:629px;width:51px;height:24px;background:#fde2a0"><b>۱۴۷</b></div>
<div class="c nu" style="left:1056px;top:629px;width:90px;height:24px;background:#fde2a0"><b>۶<i></i>۹,۸۷<i></i>,۷۴۸</b></div>
<div class="c nu" style="left:963px;top:629px;width:93px;height:24px;background:#fde2a0"><b>۸۹,۶۵۱</b></div>
<div class="c nu" style="left:917px;top:629px;width:46px;height:24px;background:#efefef"><b>۵۶۳</b></div>
<div class="c nu" style="left:867px;top:629px;width:50px;height:24px;background:#efefef"></div>
<div class="c nu" style="left:777px;top:629px;width:90px;height:24px;background:#fde2a0"><b><i></i></b></div>
<div class="c nu" style="left:689px;top:629px;width:88px;height:24px;background:#efefef"><b><i></i></b></div>
<div class="c nu" style="left:638px;top:629px;width:51px;height:24px;background:#fde2a0"><b>۲,۵۳۱</b></div>
<div class="c nu" style="left:586px;top:629px;width:52px;height:24px;background:#fde2a0"><b>۱۴۷</b></div>
<div class="c nu" style="left:487px;top:629px;width:99px;height:24px;background:#fde2a0"><b>۶<i></i>۹,۸۷<i></i>,۷۴۸</b></div>
<div class="c nu" style="left:394px;top:629px;width:93px;height:24px;background:#fde2a0"><b>۸۹,۶۵۱</b></div>
<div class="c nu" style="left:347px;top:629px;width:47px;height:24px;background:#efefef"><b>۸۹۶</b></div>
<div class="c nu" style="left:295px;top:629px;width:52px;height:24px;background:#efefef"><b>۵۲۳</b></div>
<div class="c nu" style="left:201px;top:629px;width:94px;height:24px;background:#fde2a0"><b>۴<i></i>۹,۱۳<i></i>,<i></i>۱۹</b></div>
<div class="c nu" style="left:109px;top:629px;width:92px;height:24px;background:#efefef"><b>۲۱۳,۹۷۵</b></div>
<div class="c st" style="left:35px;top:629px;width:74px;height:24px;background:#efefef">تولید</div>
<div class="c nm" style="left:1731px;top:653px;width:153px;height:24px;background:#d1e3f6">دولوميت</div>
<div class="c un" style="left:1702px;top:653px;width:29px;height:24px;background:#d1e3f6">تن</div>
<div class="c nu" style="left:1652px;top:653px;width:50px;height:24px;background:#d1e3f6"><b>۳,۶۱۷</b></div>
<div class="c nu" style="left:1601px;top:653px;width:51px;height:24px;background:#d1e3f6"><b>۸<i></i></b></div>
<div class="c nu" style="left:1511px;top:653px;width:90px;height:24px;background:#fde2a0"><b>۱۶,۵۳۷,۵<i></i><i></i></b></div>
<div class="c nu" style="left:1418px;top:653px;width:93px;height:24px;background:#d1e3f6"><b>۱,۳۲۳</b></div>
<div class="c nu" style="left:1375px;top:653px;width:43px;height:24px;background:#d1e3f6"><b><i></i></b></div>
<div class="c nu" style="left:1326px;top:653px;width:49px;height:24px;background:#d1e3f6"><b><i></i></b></div>
<div class="c nu" style="left:1247px;top:653px;width:79px;height:24px;background:#d1e3f6"><b><i></i></b></div>
<div class="c nu" style="left:1197px;top:653px;width:50px;height:24px;background:#fde2a0"><b>۳,۶۱۷</b></div>
<div class="c nu" style="left:1146px;top:653px;width:51px;height:24px;background:#fde2a0"><b>۸<i></i></b></div>
<div class="c nu" style="left:1056px;top:653px;width:90px;height:24px;background:#fde2a0"><b>۱۶,۵۳۷,۵<i></i><i></i></b></div>
<div class="c nu" style="left:963px;top:653px;width:93px;height:24px;background:#fde2a0"><b>۱,۳۲۳</b></div>
<div class="c nu" style="left:917px;top:653px;width:46px;height:24px;background:#d1e3f6"></div>
<div class="c nu" style="left:867px;top:653px;width:50px;height:24px;background:#d1e3f6"></div>
<div class="c nu" style="left:777px;top:653px;width:90px;height:24px;background:#fde2a0"><b><i></i></b></div>
<div class="c nu" style="left:689px;top:653px;width:88px;height:24px;background:#d1e3f6"><b><i></i></b></div>
<div class="c nu" style="left:638px;top:653px;width:51px;height:24px;background:#fde2a0"><b>۳,۶۱۷</b></div>
<div class="c nu" style="left:586px;top:653px;width:52px;height:24px;background:#fde2a0"><b>۸<i></i></b></div>
<div class="c nu" style="left:487px;top:653px;width:99px;height:24px;background:#fde2a0"><b>۱۶,۵۳۷,۵<i></i><i></i></b></div>
<div class="c nu" style="left:394px;top:653px;width:93px;height:24px;background:#fde2a0"><b>۱,۳۲۳</b></div>
<div class="c nu" style="left:347px;top:653px;width:47px;height:24px;background:#d1e3f6"><b><i></i></b></div>
<div class="c nu" style="left:295px;top:653px;width:52px;height:24px;background:#d1e3f6"><b><i></i></b></div>
<div class="c nu" style="left:201px;top:653px;width:94px;height:24px;background:#fde2a0"><b><i></i></b></div>
<div class="c nu" style="left:109px;top:653px;width:92px;height:24px;background:#d1e3f6"><b><i></i></b></div>
<div class="c st" style="left:35px;top:653px;width:74px;height:24px;background:#d1e3f6">تولید</div>
<div class="c nm" style="left:1731px;top:677px;width:153px;height:24px;background:#efefef">ساير درآمدها</div>
<div class="c un sm" style="left:1702px;top:677px;width:29px;height:24px;background:#efefef">ريال</div>
<div class="c nu" style="left:1652px;top:677px;width:50px;height:24px;background:#efefef"><b><i></i></b></div>
<div class="c nu" style="left:1601px;top:677px;width:51px;height:24px;background:#efefef"><b><i></i></b></div>
<div class="c nu" style="left:1511px;top:677px;width:90px;height:24px;background:#fde2a0"><b><i></i></b></div>
<div class="c nu" style="left:1418px;top:677px;width:93px;height:24px;background:#efefef"><b><i></i></b></div>
<div class="c nu" style="left:1375px;top:677px;width:43px;height:24px;background:#efefef"><b><i></i></b></div>
<div class="c nu" style="left:1326px;top:677px;width:49px;height:24px;background:#efefef"><b><i></i></b></div>
<div class="c nu" style="left:1247px;top:677px;width:79px;height:24px;background:#efefef"><b><i></i></b></div>
<div class="c nu" style="left:1197px;top:677px;width:50px;height:24px;background:#fde2a0"><b><i></i></b></div>
<div class="c nu" style="left:1146px;top:677px;width:51px;height:24px;background:#fde2a0"><b><i></i></b></div>
<div class="c nu" style="left:1056px;top:677px;width:90px;height:24px;background:#fde2a0"><b><i></i></b></div>
<div class="c nu" style="left:963px;top:677px;width:93px;height:24px;background:#fde2a0"><b><i></i></b></div>
<div class="c nu" style="left:917px;top:677px;width:46px;height:24px;background:#efefef"></div>
<div class="c nu" style="left:867px;top:677px;width:50px;height:24px;background:#efefef"></div>
<div class="c nu" style="left:777px;top:677px;width:90px;height:24px;background:#fde2a0"><b><i></i></b></div>
<div class="c nu" style="left:689px;top:677px;width:88px;height:24px;background:#efefef"><b><i></i></b></div>
<div class="c nu" style="left:638px;top:677px;width:51px;height:24px;background:#fde2a0"><b><i></i></b></div>
<div class="c nu" style="left:586px;top:677px;width:52px;height:24px;background:#fde2a0"><b><i></i></b></div>
<div class="c nu" style="left:487px;top:677px;width:99px;height:24px;background:#fde2a0"><b><i></i></b></div>
<div class="c nu" style="left:394px;top:677px;width:93px;height:24px;background:#fde2a0"><b><i></i></b></div>
<div class="c nu" style="left:347px;top:677px;width:47px;height:24px;background:#efefef"><b><i></i></b></div>
<div class="c nu" style="left:295px;top:677px;width:52px;height:24px;background:#efefef"><b>۱</b></div>
<div class="c nu" style="left:201px;top:677px;width:94px;height:24px;background:#fde2a0"><b>۳۶,۴۱۷,<i></i><i></i><i></i>,<i></i><i></i><i></i></b></div>
<div class="c nu" style="left:109px;top:677px;width:92px;height:24px;background:#efefef"><b>۳۶,۴۱۷</b></div>
<div class="c st" style="left:35px;top:677px;width:74px;height:24px;background:#efefef">تولید</div>
<div class="c nm" style="left:1731px;top:701px;width:153px;height:24px;background:#d1e3f6">مواد ويژه آلوميني</div>
<div class="c un" style="left:1702px;top:701px;width:29px;height:24px;background:#d1e3f6">تن</div>
<div class="c nu" style="left:1652px;top:701px;width:50px;height:24px;background:#d1e3f6"><b>۹<i></i>۸</b></div>
<div class="c nu" style="left:1601px;top:701px;width:51px;height:24px;background:#d1e3f6"><b>۱,۷۳<i></i></b></div>
<div class="c nu" style="left:1511px;top:701px;width:90px;height:24px;background:#fde2a0"><b>۱۶۹,۲۹۷,۶۸۸</b></div>
<div class="c nu" style="left:1418px;top:701px;width:93px;height:24px;background:#d1e3f6"><b>۲۹۲,۸۸۵</b></div>
<div class="c nu" style="left:1375px;top:701px;width:43px;height:24px;background:#d1e3f6"><b><i></i></b></div>
<div class="c nu" style="left:1326px;top:701px;width:49px;height:24px;background:#d1e3f6"><b><i></i></b></div>
<div class="c nu" style="left:1247px;top:701px;width:79px;height:24px;background:#d1e3f6"><b><i></i></b></div>
<div class="c nu" style="left:1197px;top:701px;width:50px;height:24px;background:#fde2a0"><b>۹<i></i>۸</b></div>
<div class="c nu" style="left:1146px;top:701px;width:51px;height:24px;background:#fde2a0"><b>۱,۷۳<i></i></b></div>
<div class="c nu" style="left:1056px;top:701px;width:90px;height:24px;background:#fde2a0"><b>۱۶۹,۲۹۷,۶۸۸</b></div>
<div class="c nu" style="left:963px;top:701px;width:93px;height:24px;background:#fde2a0"><b>۲۹۲,۸۸۵</b></div>
<div class="c nu" style="left:917px;top:701px;width:46px;height:24px;background:#d1e3f6"><b>۷۶</b></div>
<div class="c nu" style="left:867px;top:701px;width:50px;height:24px;background:#d1e3f6"><b>۹۹</b></div>
<div class="c nu" style="left:777px;top:701px;width:90px;height:24px;background:#fde2a0"><b>۳۴۸,۹۵۹,۵۹۶</b></div>
<div class="c nu" style="left:689px;top:701px;width:88px;height:24px;background:#d1e3f6"><b>۳۴,۵۴۷</b></div>
<div class="c nu" style="left:638px;top:701px;width:51px;height:24px;background:#fde2a0"><b>۹۸۴</b></div>
<div class="c nu" style="left:586px;top:701px;width:52px;height:24px;background:#fde2a0"><b>۱,۸۲۹</b></div>
<div class="c nu" style="left:487px;top:701px;width:99px;height:24px;background:#fde2a0"><b>۱۷۹,<i></i>۲۲,۴۱۷</b></div>
<div class="c nu" style="left:394px;top:701px;width:93px;height:24px;background:#fde2a0"><b>۳۲۷,۴۳۲</b></div>
<div class="c nu" style="left:347px;top:701px;width:47px;height:24px;background:#d1e3f6"><b>۲,<i></i>۲۹</b></div>
<div class="c nu" style="left:295px;top:701px;width:52px;height:24px;background:#d1e3f6"><b>۲,۳۶۵</b></div>
<div class="c nu" style="left:201px;top:701px;width:94px;height:24px;background:#fde2a0"><b>۲۲۶,۲۲۴,۱<i></i>۱</b></div>
<div class="c nu" style="left:109px;top:701px;width:92px;height:24px;background:#d1e3f6"><b>۵۳۵,<i></i>۲<i></i></b></div>
<div class="c st" style="left:35px;top:701px;width:74px;height:24px;background:#d1e3f6">تولید</div>
<div class="c nm" style="left:1731px;top:725px;width:153px;height:24px;background:#efefef">برگشت از فروش مواد ويژه</div>
<div class="c un" style="left:1702px;top:725px;width:29px;height:24px;background:#efefef">تن</div>
<div class="c nu" style="left:1652px;top:725px;width:50px;height:24px;background:#efefef"><b><i></i></b></div>
<div class="c nu" style="left:1601px;top:725px;width:51px;height:24px;background:#efefef"><b><i></i></b></div>
<div class="c nu" style="left:1511px;top:725px;width:90px;height:24px;background:#fde2a0"><b><i></i></b></div>
<div class="c nu" style="left:1418px;top:725px;width:93px;height:24px;background:#efefef"><b><i></i></b></div>
<div class="c nu" style="left:1375px;top:725px;width:43px;height:24px;background:#efefef"><b><i></i></b></div>
<div class="c nu" style="left:1326px;top:725px;width:49px;height:24px;background:#efefef"><b><i></i></b></div>
<div class="c nu" style="left:1247px;top:725px;width:79px;height:24px;background:#efefef"><b><i></i></b></div>
<div class="c nu" style="left:1197px;top:725px;width:50px;height:24px;background:#fde2a0"><b><i></i></b></div>
<div class="c nu" style="left:1146px;top:725px;width:51px;height:24px;background:#fde2a0"><b><i></i></b></div>
<div class="c nu" style="left:1056px;top:725px;width:90px;height:24px;background:#fde2a0"><b><i></i></b></div>
<div class="c nu" style="left:963px;top:725px;width:93px;height:24px;background:#fde2a0"><b><i></i></b></div>
<div class="c nu" style="left:917px;top:725px;width:46px;height:24px;background:#efefef"></div>
<div class="c nu" style="left:867px;top:725px;width:50px;height:24px;background:#efefef"></div>
<div class="c nu" style="left:777px;top:725px;width:90px;height:24px;background:#fde2a0"><b><i></i></b></div>
<div class="c nu" style="left:689px;top:725px;width:88px;height:24px;background:#efefef"><b><i></i></b></div>
<div class="c nu" style="left:638px;top:725px;width:51px;height:24px;background:#fde2a0"><b><i></i></b></div>
<div class="c nu" style="left:586px;top:725px;width:52px;height:24px;background:#fde2a0"><b><i></i></b></div>
<div class="c nu" style="left:487px;top:725px;width:99px;height:24px;background:#fde2a0"><b><i></i></b></div>
<div class="c nu" style="left:394px;top:725px;width:93px;height:24px;background:#fde2a0"><b><i></i></b></div>
<div class="c nu" style="left:347px;top:725px;width:47px;height:24px;background:#efefef"><b><i></i></b></div>
<div class="c nu" style="left:295px;top:725px;width:52px;height:24px;background:#efefef"><b><i></i></b></div>
<div class="c nu" style="left:201px;top:725px;width:94px;height:24px;background:#fde2a0"><b><i></i></b></div>
<div class="c nu" style="left:109px;top:725px;width:92px;height:24px;background:#efefef"><b><i></i></b></div>
<div class="c st" style="left:35px;top:725px;width:74px;height:24px;background:#efefef">تولید</div>
<div class="c nm" style="left:1731px;top:749px;width:153px;height:24px;background:#fde2a0">جمع فروش داخلی</div>
<div class="c un" style="left:1702px;top:749px;width:29px;height:24px;background:#fde2a0"></div>
<div class="c nu" style="left:1652px;top:749px;width:50px;height:24px;background:#fde2a0"><b>۲۱,۵۵۳</b></div>
<div class="c nu" style="left:1601px;top:749px;width:51px;height:24px;background:#fde2a0"><b>۱<i></i>,۲۹۵</b></div>
<div class="c nu" style="left:1511px;top:749px;width:90px;height:24px;background:#fde2a0"></div>
<div class="c nu" style="left:1418px;top:749px;width:93px;height:24px;background:#fde2a0"><b>۳,۶۵۳,۶۶۶</b></div>
<div class="c nu" style="left:1375px;top:749px;width:43px;height:24px;background:#fde2a0"><b><i></i></b></div>
<div class="c nu" style="left:1326px;top:749px;width:49px;height:24px;background:#fde2a0"><b><i></i></b></div>
<div class="c nu" style="left:1247px;top:749px;width:79px;height:24px;background:#fde2a0"><b><i></i></b></div>
<div class="c nu" style="left:1197px;top:749px;width:50px;height:24px;background:#fde2a0"><b>۲۱,۵۵۳</b></div>
<div class="c nu" style="left:1146px;top:749px;width:51px;height:24px;background:#fde2a0"><b>۱<i></i>,۲۹۵</b></div>
<div class="c nu" style="left:1056px;top:749px;width:90px;height:24px;background:#fde2a0"></div>
<div class="c nu" style="left:963px;top:749px;width:93px;height:24px;background:#fde2a0"><b>۳,۶۵۳,۶۶۶</b></div>
<div class="c nu" style="left:917px;top:749px;width:46px;height:24px;background:#fde2a0"><b>۳,۱۸۹</b></div>
<div class="c nu" style="left:867px;top:749px;width:50px;height:24px;background:#fde2a0"><b>۱,۴۲۴</b></div>
<div class="c nu" style="left:777px;top:749px;width:90px;height:24px;background:#fde2a0"></div>
<div class="c nu" style="left:689px;top:749px;width:88px;height:24px;background:#fde2a0"><b>۶<i></i>۳,۲۴۷</b></div>
<div class="c nu" style="left:638px;top:749px;width:51px;height:24px;background:#fde2a0"><b>۲۴,۷۴۲</b></div>
<div class="c nu" style="left:586px;top:749px;width:52px;height:24px;background:#fde2a0"><b>۱۱,۷۱۹</b></div>
<div class="c nu" style="left:487px;top:749px;width:99px;height:24px;background:#fde2a0"></div>
<div class="c nu" style="left:394px;top:749px;width:93px;height:24px;background:#fde2a0"><b>۴,۲۵۶,۹۱۳</b></div>
<div class="c nu" style="left:347px;top:749px;width:47px;height:24px;background:#fde2a0"><b>۳۱,<i></i>۱۷</b></div>
<div class="c nu" style="left:295px;top:749px;width:52px;height:24px;background:#fde2a0"><b>۲۴,۴۱۵</b></div>
<div class="c nu" style="left:201px;top:749px;width:94px;height:24px;background:#fde2a0"></div>
<div class="c nu" style="left:109px;top:749px;width:92px;height:24px;background:#fde2a0"><b>۶,۸۴۵,۱۹۹</b></div>
<div class="c st" style="left:35px;top:749px;width:74px;height:24px;background:#fde2a0"></div>
<div class="c nm sb" style="left:1731px;top:773px;width:153px;height:24px;background:#d4d4d4">فروش صادراتی:</div>
<div class="c " style="left:1702px;top:773px;width:29px;height:24px;background:#d4d4d4"></div>
<div class="c " style="left:1652px;top:773px;width:50px;height:24px;background:#d4d4d4"></div>
<div class="c " style="left:1601px;top:773px;width:51px;height:24px;background:#d4d4d4"></div>
<div class="c " style="left:1511px;top:773px;width:90px;height:24px;background:#d4d4d4"></div>
<div class="c " style="left:1418px;top:773px;width:93px;height:24px;background:#d4d4d4"></div>
<div class="c " style="left:1375px;top:773px;width:43px;height:24px;background:#d4d4d4"></div>
<div class="c " style="left:1326px;top:773px;width:49px;height:24px;background:#d4d4d4"></div>
<div class="c " style="left:1247px;top:773px;width:79px;height:24px;background:#d4d4d4"></div>
<div class="c " style="left:1197px;top:773px;width:50px;height:24px;background:#d4d4d4"></div>
<div class="c " style="left:1146px;top:773px;width:51px;height:24px;background:#d4d4d4"></div>
<div class="c " style="left:1056px;top:773px;width:90px;height:24px;background:#d4d4d4"></div>
<div class="c " style="left:963px;top:773px;width:93px;height:24px;background:#d4d4d4"></div>
<div class="c " style="left:917px;top:773px;width:46px;height:24px;background:#d4d4d4"></div>
<div class="c " style="left:867px;top:773px;width:50px;height:24px;background:#d4d4d4"></div>
<div class="c " style="left:777px;top:773px;width:90px;height:24px;background:#d4d4d4"></div>
<div class="c " style="left:689px;top:773px;width:88px;height:24px;background:#d4d4d4"></div>
<div class="c " style="left:638px;top:773px;width:51px;height:24px;background:#d4d4d4"></div>
<div class="c " style="left:586px;top:773px;width:52px;height:24px;background:#d4d4d4"></div>
<div class="c " style="left:487px;top:773px;width:99px;height:24px;background:#d4d4d4"></div>
<div class="c " style="left:394px;top:773px;width:93px;height:24px;background:#d4d4d4"></div>
<div class="c " style="left:347px;top:773px;width:47px;height:24px;background:#d4d4d4"></div>
<div class="c " style="left:295px;top:773px;width:52px;height:24px;background:#d4d4d4"></div>
<div class="c " style="left:201px;top:773px;width:94px;height:24px;background:#d4d4d4"></div>
<div class="c " style="left:109px;top:773px;width:92px;height:24px;background:#d4d4d4"></div>
<div class="c " style="left:35px;top:773px;width:74px;height:24px;background:#d4d4d4"></div>
<div class="c nm" style="left:1731px;top:797px;width:153px;height:24px;background:#efefef">موادويژه</div>
<div class="c un" style="left:1702px;top:797px;width:29px;height:24px;background:#efefef">تن</div>
<div class="c nu" style="left:1652px;top:797px;width:50px;height:24px;background:#efefef"><b><i></i></b></div>
<div class="c nu" style="left:1601px;top:797px;width:51px;height:24px;background:#efefef"><b>۵۴<i></i></b></div>
<div class="c nu" style="left:1511px;top:797px;width:90px;height:24px;background:#fde2a0"><b>۲۹۵,۸<i></i>۷,۴<i></i>۷</b></div>
<div class="c nu" style="left:1418px;top:797px;width:93px;height:24px;background:#efefef"><b>۱۵۹,۷۳۶</b></div>
<div class="c nu" style="left:1375px;top:797px;width:43px;height:24px;background:#efefef"><b><i></i></b></div>
<div class="c nu" style="left:1326px;top:797px;width:49px;height:24px;background:#efefef"><b><i></i></b></div>
<div class="c nu" style="left:1247px;top:797px;width:79px;height:24px;background:#efefef"><b><i></i></b></div>
<div class="c nu" style="left:1197px;top:797px;width:50px;height:24px;background:#fde2a0"><b><i></i></b></div>
<div class="c nu" style="left:1146px;top:797px;width:51px;height:24px;background:#fde2a0"><b>۵۴<i></i></b></div>
<div class="c nu" style="left:1056px;top:797px;width:90px;height:24px;background:#fde2a0"><b>۲۹۵,۸<i></i>۷,۴<i></i>۷</b></div>
<div class="c nu" style="left:963px;top:797px;width:93px;height:24px;background:#fde2a0"><b>۱۵۹,۷۳۶</b></div>
<div class="c nu" style="left:917px;top:797px;width:46px;height:24px;background:#efefef"></div>
<div class="c nu" style="left:867px;top:797px;width:50px;height:24px;background:#efefef"></div>
<div class="c nu" style="left:777px;top:797px;width:90px;height:24px;background:#fde2a0"><b><i></i></b></div>
<div class="c nu" style="left:689px;top:797px;width:88px;height:24px;background:#efefef"><b><i></i></b></div>
<div class="c nu" style="left:638px;top:797px;width:51px;height:24px;background:#fde2a0"><b><i></i></b></div>
<div class="c nu" style="left:586px;top:797px;width:52px;height:24px;background:#fde2a0"><b>۵۴<i></i></b></div>
<div class="c nu" style="left:487px;top:797px;width:99px;height:24px;background:#fde2a0"><b>۲۹۵,۸<i></i>۷,۴<i></i>۷</b></div>
<div class="c nu" style="left:394px;top:797px;width:93px;height:24px;background:#fde2a0"><b>۱۵۹,۷۳۶</b></div>
<div class="c nu" style="left:347px;top:797px;width:47px;height:24px;background:#efefef"><b><i></i></b></div>
<div class="c nu" style="left:295px;top:797px;width:52px;height:24px;background:#efefef"><b>۷۵</b></div>
<div class="c nu" style="left:201px;top:797px;width:94px;height:24px;background:#fde2a0"><b>۲<i></i>۲,۷۷۳,۳۳۳</b></div>
<div class="c nu" style="left:109px;top:797px;width:92px;height:24px;background:#efefef"><b>۱۵,۲<i></i>۸</b></div>
<div class="c st" style="left:35px;top:797px;width:74px;height:24px;background:#efefef">تولید</div>
<div class="c nm" style="left:1731px;top:821px;width:153px;height:25px;background:#d1e3f6">آجر</div>
<div class="c un" style="left:1702px;top:821px;width:29px;height:25px;background:#d1e3f6">تن</div>
<div class="c nu" style="left:1652px;top:821px;width:50px;height:25px;background:#d1e3f6"><b><i></i></b></div>
<div class="c nu" style="left:1601px;top:821px;width:51px;height:25px;background:#d1e3f6"><b>۲۱۷</b></div>
<div class="c nu" style="left:1511px;top:821px;width:90px;height:25px;background:#fde2a0"><b>۳۷۹,۹۴۹,۳<i></i>۹</b></div>
<div class="c nu" style="left:1418px;top:821px;width:93px;height:25px;background:#d1e3f6"><b>۸۲,۴۴۹</b></div>
<div class="c nu" style="left:1375px;top:821px;width:43px;height:25px;background:#d1e3f6"><b><i></i></b></div>
<div class="c nu" style="left:1326px;top:821px;width:49px;height:25px;background:#d1e3f6"><b><i></i></b></div>
<div class="c nu" style="left:1247px;top:821px;width:79px;height:25px;background:#d1e3f6"><b><i></i></b></div>
<div class="c nu" style="left:1197px;top:821px;width:50px;height:25px;background:#fde2a0"><b><i></i></b></div>
<div class="c nu" style="left:1146px;top:821px;width:51px;height:25px;background:#fde2a0"><b>۲۱۷</b></div>
<div class="c nu" style="left:1056px;top:821px;width:90px;height:25px;background:#fde2a0"><b>۳۷۹,۹۴۹,۳<i></i>۹</b></div>
<div class="c nu" style="left:963px;top:821px;width:93px;height:25px;background:#fde2a0"><b>۸۲,۴۴۹</b></div>
<div class="c nu" style="left:917px;top:821px;width:46px;height:25px;background:#d1e3f6"></div>
<div class="c nu" style="left:867px;top:821px;width:50px;height:25px;background:#d1e3f6"></div>
<div class="c nu" style="left:777px;top:821px;width:90px;height:25px;background:#fde2a0"><b><i></i></b></div>
<div class="c nu" style="left:689px;top:821px;width:88px;height:25px;background:#d1e3f6"><b><i></i></b></div>
<div class="c nu" style="left:638px;top:821px;width:51px;height:25px;background:#fde2a0"><b><i></i></b></div>
<div class="c nu" style="left:586px;top:821px;width:52px;height:25px;background:#fde2a0"><b>۲۱۷</b></div>
<div class="c nu" style="left:487px;top:821px;width:99px;height:25px;background:#fde2a0"><b>۳۷۹,۹۴۹,۳<i></i>۹</b></div>
<div class="c nu" style="left:394px;top:821px;width:93px;height:25px;background:#fde2a0"><b>۸۲,۴۴۹</b></div>
<div class="c nu" style="left:347px;top:821px;width:47px;height:25px;background:#d1e3f6"><b><i></i></b></div>
<div class="c nu" style="left:295px;top:821px;width:52px;height:25px;background:#d1e3f6"><b>۶۷۲</b></div>
<div class="c nu" style="left:201px;top:821px;width:94px;height:25px;background:#fde2a0"><b>۲۱۹,۷۲۳,۲۱۴</b></div>
<div class="c nu" style="left:109px;top:821px;width:92px;height:25px;background:#d1e3f6"><b>۱۴۷,۶۵۴</b></div>
<div class="c st" style="left:35px;top:821px;width:74px;height:25px;background:#d1e3f6">تولید</div>
<div class="c nm" style="left:1731px;top:846px;width:153px;height:24px;background:#fde2a0">جمع فروش صادراتی</div>
<div class="c un" style="left:1702px;top:846px;width:29px;height:24px;background:#fde2a0"></div>
<div class="c nu" style="left:1652px;top:846px;width:50px;height:24px;background:#fde2a0"><b><i></i></b></div>
<div class="c nu" style="left:1601px;top:846px;width:51px;height:24px;background:#fde2a0"><b>۷۵۷</b></div>
<div class="c nu" style="left:1511px;top:846px;width:90px;height:24px;background:#fde2a0"></div>
<div class="c nu" style="left:1418px;top:846px;width:93px;height:24px;background:#fde2a0"><b>۲۴۲,۱۸۵</b></div>
<div class="c nu" style="left:1375px;top:846px;width:43px;height:24px;background:#fde2a0"><b><i></i></b></div>
<div class="c nu" style="left:1326px;top:846px;width:49px;height:24px;background:#fde2a0"><b><i></i></b></div>
<div class="c nu" style="left:1247px;top:846px;width:79px;height:24px;background:#fde2a0"><b><i></i></b></div>
<div class="c nu" style="left:1197px;top:846px;width:50px;height:24px;background:#fde2a0"><b><i></i></b></div>
<div class="c nu" style="left:1146px;top:846px;width:51px;height:24px;background:#fde2a0"><b>۷۵۷</b></div>
<div class="c nu" style="left:1056px;top:846px;width:90px;height:24px;background:#fde2a0"></div>
<div class="c nu" style="left:963px;top:846px;width:93px;height:24px;background:#fde2a0"><b>۲۴۲,۱۸۵</b></div>
<div class="c nu" style="left:917px;top:846px;width:46px;height:24px;background:#fde2a0"><b><i></i></b></div>
<div class="c nu" style="left:867px;top:846px;width:50px;height:24px;background:#fde2a0"><b><i></i></b></div>
<div class="c nu" style="left:777px;top:846px;width:90px;height:24px;background:#fde2a0"></div>
<div class="c nu" style="left:689px;top:846px;width:88px;height:24px;background:#fde2a0"><b><i></i></b></div>
<div class="c nu" style="left:638px;top:846px;width:51px;height:24px;background:#fde2a0"><b><i></i></b></div>
<div class="c nu" style="left:586px;top:846px;width:52px;height:24px;background:#fde2a0"><b>۷۵۷</b></div>
<div class="c nu" style="left:487px;top:846px;width:99px;height:24px;background:#fde2a0"></div>
<div class="c nu" style="left:394px;top:846px;width:93px;height:24px;background:#fde2a0"><b>۲۴۲,۱۸۵</b></div>
<div class="c nu" style="left:347px;top:846px;width:47px;height:24px;background:#fde2a0"><b><i></i></b></div>
<div class="c nu" style="left:295px;top:846px;width:52px;height:24px;background:#fde2a0"><b>۷۴۷</b></div>
<div class="c nu" style="left:201px;top:846px;width:94px;height:24px;background:#fde2a0"></div>
<div class="c nu" style="left:109px;top:846px;width:92px;height:24px;background:#fde2a0"><b>۱۶۲,۸۶۲</b></div>
<div class="c st" style="left:35px;top:846px;width:74px;height:24px;background:#fde2a0"></div>
<div class="c nm sb" style="left:1731px;top:870px;width:153px;height:24px;background:#d4d4d4">درآمد ارائه خدمات:</div>
<div class="c " style="left:1702px;top:870px;width:29px;height:24px;background:#d4d4d4"></div>
<div class="c " style="left:1652px;top:870px;width:50px;height:24px;background:#d4d4d4"></div>
<div class="c " style="left:1601px;top:870px;width:51px;height:24px;background:#d4d4d4"></div>
<div class="c " style="left:1511px;top:870px;width:90px;height:24px;background:#d4d4d4"></div>
<div class="c " style="left:1418px;top:870px;width:93px;height:24px;background:#d4d4d4"></div>
<div class="c " style="left:1375px;top:870px;width:43px;height:24px;background:#d4d4d4"></div>
<div class="c " style="left:1326px;top:870px;width:49px;height:24px;background:#d4d4d4"></div>
<div class="c " style="left:1247px;top:870px;width:79px;height:24px;background:#d4d4d4"></div>
<div class="c " style="left:1197px;top:870px;width:50px;height:24px;background:#d4d4d4"></div>
<div class="c " style="left:1146px;top:870px;width:51px;height:24px;background:#d4d4d4"></div>
<div class="c " style="left:1056px;top:870px;width:90px;height:24px;background:#d4d4d4"></div>
<div class="c " style="left:963px;top:870px;width:93px;height:24px;background:#d4d4d4"></div>
<div class="c " style="left:917px;top:870px;width:46px;height:24px;background:#d4d4d4"></div>
<div class="c " style="left:867px;top:870px;width:50px;height:24px;background:#d4d4d4"></div>
<div class="c " style="left:777px;top:870px;width:90px;height:24px;background:#d4d4d4"></div>
<div class="c " style="left:689px;top:870px;width:88px;height:24px;background:#d4d4d4"></div>
<div class="c " style="left:638px;top:870px;width:51px;height:24px;background:#d4d4d4"></div>
<div class="c " style="left:586px;top:870px;width:52px;height:24px;background:#d4d4d4"></div>
<div class="c " style="left:487px;top:870px;width:99px;height:24px;background:#d4d4d4"></div>
<div class="c " style="left:394px;top:870px;width:93px;height:24px;background:#d4d4d4"></div>
<div class="c " style="left:347px;top:870px;width:47px;height:24px;background:#d4d4d4"></div>
<div class="c " style="left:295px;top:870px;width:52px;height:24px;background:#d4d4d4"></div>
<div class="c " style="left:201px;top:870px;width:94px;height:24px;background:#d4d4d4"></div>
<div class="c " style="left:109px;top:870px;width:92px;height:24px;background:#d4d4d4"></div>
<div class="c " style="left:35px;top:870px;width:74px;height:24px;background:#d4d4d4"></div>
<div class="c nm" style="left:1731px;top:894px;width:153px;height:41px;background:#d1e3f6">درآمد حاصل از تامين و اجراي پروژه هاي تانديش</div>
<div class="c un sm" style="left:1702px;top:894px;width:29px;height:41px;background:#d1e3f6">پروژه</div>
<div class="c nu" style="left:1652px;top:894px;width:50px;height:41px;background:#d1e3f6"><b><i></i></b></div>
<div class="c nu" style="left:1601px;top:894px;width:51px;height:41px;background:#d1e3f6"><b>۲</b></div>
<div class="c nu" style="left:1511px;top:894px;width:90px;height:41px;background:#fde2a0"><b>۴<i></i>۴,۱<i></i>۶,<i></i><i></i><i></i>,<i></i><i></i><i></i></b></div>
<div class="c nu" style="left:1418px;top:894px;width:93px;height:41px;background:#d1e3f6"><b>۸<i></i>۸,۲۱۲</b></div>
<div class="c nu" style="left:1375px;top:894px;width:43px;height:41px;background:#d1e3f6"><b><i></i></b></div>
<div class="c nu" style="left:1326px;top:894px;width:49px;height:41px;background:#d1e3f6"><b><i></i></b></div>
<div class="c nu" style="left:1247px;top:894px;width:79px;height:41px;background:#d1e3f6"><b><i></i></b></div>
<div class="c nu" style="left:1197px;top:894px;width:50px;height:41px;background:#fde2a0"><b><i></i></b></div>
<div class="c nu" style="left:1146px;top:894px;width:51px;height:41px;background:#fde2a0"><b>۲</b></div>
<div class="c nu" style="left:1056px;top:894px;width:90px;height:41px;background:#fde2a0"><b>۴<i></i>۴,۱<i></i>۶,<i></i><i></i><i></i>,<i></i><i></i><i></i></b></div>
<div class="c nu" style="left:963px;top:894px;width:93px;height:41px;background:#fde2a0"><b>۸<i></i>۸,۲۱۲</b></div>
<div class="c nu" style="left:917px;top:894px;width:46px;height:41px;background:#d1e3f6"><b><i></i></b></div>
<div class="c nu" style="left:867px;top:894px;width:50px;height:41px;background:#d1e3f6"><b>۱</b></div>
<div class="c nu" style="left:777px;top:894px;width:90px;height:41px;background:#fde2a0"><b>۱۱۷,<i></i>۳۹,<i></i><i></i><i></i>,<i></i><i></i><i></i></b></div>
<div class="c nu" style="left:689px;top:894px;width:88px;height:41px;background:#d1e3f6"><b>۱۱۷,<i></i>۳۹</b></div>
<div class="c nu" style="left:638px;top:894px;width:51px;height:41px;background:#fde2a0"><b><i></i></b></div>
<div class="c nu" style="left:586px;top:894px;width:52px;height:41px;background:#fde2a0"><b>۳</b></div>
<div class="c nu" style="left:487px;top:894px;width:99px;height:41px;background:#fde2a0"><b>۳<i></i>۸,۴۱۷,<i></i><i></i><i></i>,<i></i><i></i><i></i></b></div>
<div class="c nu" style="left:394px;top:894px;width:93px;height:41px;background:#fde2a0"><b>۹۲۵,۲۵۱</b></div>
<div class="c nu" style="left:347px;top:894px;width:47px;height:41px;background:#d1e3f6"><b>۸</b></div>
<div class="c nu" style="left:295px;top:894px;width:52px;height:41px;background:#d1e3f6"><b>۹</b></div>
<div class="c nu" style="left:201px;top:894px;width:94px;height:41px;background:#fde2a0"><b>۹۳,۲۷۱,۸۸۸,۸۸۹</b></div>
<div class="c nu" style="left:109px;top:894px;width:92px;height:41px;background:#d1e3f6"><b>۸۳۹,۴۴۷</b></div>
<div class="c st" style="left:35px;top:894px;width:74px;height:41px;background:#d1e3f6">تولید</div>
<div class="c nm" style="left:1731px;top:935px;width:153px;height:41px;background:#efefef">تامين و اجراي كوره هاي قوس الكتريكي فولاد مباركه اصفهان</div>
<div class="c un" style="left:1702px;top:935px;width:29px;height:41px;background:#efefef">تن</div>
<div class="c nu" style="left:1652px;top:935px;width:50px;height:41px;background:#efefef"><b><i></i></b></div>
<div class="c nu" style="left:1601px;top:935px;width:51px;height:41px;background:#efefef"><b>۱۴,۱۵۴</b></div>
<div class="c nu" style="left:1511px;top:935px;width:90px;height:41px;background:#fde2a0"><b>۴۱۷,۱۲۴,۵۵۸</b></div>
<div class="c nu" style="left:1418px;top:935px;width:93px;height:41px;background:#efefef"><b>۵,۹<i></i>۳,۹۸۱</b></div>
<div class="c nu" style="left:1375px;top:935px;width:43px;height:41px;background:#efefef"><b><i></i></b></div>
<div class="c nu" style="left:1326px;top:935px;width:49px;height:41px;background:#efefef"><b><i></i></b></div>
<div class="c nu" style="left:1247px;top:935px;width:79px;height:41px;background:#efefef"><b><i></i></b></div>
<div class="c nu" style="left:1197px;top:935px;width:50px;height:41px;background:#fde2a0"><b><i></i></b></div>
<div class="c nu" style="left:1146px;top:935px;width:51px;height:41px;background:#fde2a0"><b>۱۴,۱۵۴</b></div>
<div class="c nu" style="left:1056px;top:935px;width:90px;height:41px;background:#fde2a0"><b>۴۱۷,۱۲۴,۵۵۸</b></div>
<div class="c nu" style="left:963px;top:935px;width:93px;height:41px;background:#fde2a0"><b>۵,۹<i></i>۳,۹۸۱</b></div>
<div class="c nu" style="left:917px;top:935px;width:46px;height:41px;background:#efefef"><b><i></i></b></div>
<div class="c nu" style="left:867px;top:935px;width:50px;height:41px;background:#efefef"><b>۳,۲۸۸</b></div>
<div class="c nu" style="left:777px;top:935px;width:90px;height:41px;background:#fde2a0"><b>۲۷<i></i>,۶۵۳,۲۸۵</b></div>
<div class="c nu" style="left:689px;top:935px;width:88px;height:41px;background:#efefef"><b>۸۸۹,۹<i></i>۸</b></div>
<div class="c nu" style="left:638px;top:935px;width:51px;height:41px;background:#fde2a0"><b><i></i></b></div>
<div class="c nu" style="left:586px;top:935px;width:52px;height:41px;background:#fde2a0"><b>۱۷,۴۴۲</b></div>
<div class="c nu" style="left:487px;top:935px;width:99px;height:41px;background:#fde2a0"><b>۳۸۹,۵۱۳,۱۸۷</b></div>
<div class="c nu" style="left:394px;top:935px;width:93px;height:41px;background:#fde2a0"><b>۶,۷۹۳,۸۸۹</b></div>
<div class="c nu" style="left:347px;top:935px;width:47px;height:41px;background:#efefef"><b><i></i></b></div>
<div class="c nu" style="left:295px;top:935px;width:52px;height:41px;background:#efefef"><b><i></i></b></div>
<div class="c nu" style="left:201px;top:935px;width:94px;height:41px;background:#fde2a0"><b><i></i></b></div>
<div class="c nu" style="left:109px;top:935px;width:92px;height:41px;background:#efefef"><b><i></i></b></div>
<div class="c st" style="left:35px;top:935px;width:74px;height:41px;background:#efefef">تولید</div>
<div class="c nm" style="left:1731px;top:976px;width:153px;height:24px;background:#fde2a0">جمع درآمد ارائه خدمات</div>
<div class="c un" style="left:1702px;top:976px;width:29px;height:24px;background:#fde2a0"></div>
<div class="c nu" style="left:1652px;top:976px;width:50px;height:24px;background:#fde2a0"><b><i></i></b></div>
<div class="c nu" style="left:1601px;top:976px;width:51px;height:24px;background:#fde2a0"><b>۱۴,۱۵۶</b></div>
<div class="c nu" style="left:1511px;top:976px;width:90px;height:24px;background:#fde2a0"></div>
<div class="c nu" style="left:1418px;top:976px;width:93px;height:24px;background:#fde2a0"><b>۶,۷۱۲,۱۹۳</b></div>
<div class="c nu" style="left:1375px;top:976px;width:43px;height:24px;background:#fde2a0"><b><i></i></b></div>
<div class="c nu" style="left:1326px;top:976px;width:49px;height:24px;background:#fde2a0"><b><i></i></b></div>
<div class="c nu" style="left:1247px;top:976px;width:79px;height:24px;background:#fde2a0"><b><i></i></b></div>
<div class="c nu" style="left:1197px;top:976px;width:50px;height:24px;background:#fde2a0"><b><i></i></b></div>
<div class="c nu" style="left:1146px;top:976px;width:51px;height:24px;background:#fde2a0"><b>۱۴,۱۵۶</b></div>
<div class="c nu" style="left:1056px;top:976px;width:90px;height:24px;background:#fde2a0"></div>
<div class="c nu" style="left:963px;top:976px;width:93px;height:24px;background:#fde2a0"><b>۶,۷۱۲,۱۹۳</b></div>
<div class="c nu" style="left:917px;top:976px;width:46px;height:24px;background:#fde2a0"><b><i></i></b></div>
<div class="c nu" style="left:867px;top:976px;width:50px;height:24px;background:#fde2a0"><b>۳,۲۸۹</b></div>
<div class="c nu" style="left:777px;top:976px;width:90px;height:24px;background:#fde2a0"></div>
<div class="c nu" style="left:689px;top:976px;width:88px;height:24px;background:#fde2a0"><b>۱,<i></i><i></i>۶,۹۴۷</b></div>
<div class="c nu" style="left:638px;top:976px;width:51px;height:24px;background:#fde2a0"><b><i></i></b></div>
<div class="c nu" style="left:586px;top:976px;width:52px;height:24px;background:#fde2a0"><b>۱۷,۴۴۵</b></div>
<div class="c nu" style="left:487px;top:976px;width:99px;height:24px;background:#fde2a0"></div>
<div class="c nu" style="left:394px;top:976px;width:93px;height:24px;background:#fde2a0"><b>۷,۷۱۹,۱۴<i></i></b></div>
<div class="c nu" style="left:347px;top:976px;width:47px;height:24px;background:#fde2a0"><b>۸</b></div>
<div class="c nu" style="left:295px;top:976px;width:52px;height:24px;background:#fde2a0"><b>۹</b></div>
<div class="c nu" style="left:201px;top:976px;width:94px;height:24px;background:#fde2a0"></div>
<div class="c nu" style="left:109px;top:976px;width:92px;height:24px;background:#fde2a0"><b>۸۳۹,۴۴۷</b></div>
<div class="c st" style="left:35px;top:976px;width:74px;height:24px;background:#fde2a0"></div>
<div class="c nm sb" style="left:1731px;top:1000px;width:153px;height:25px;background:#d4d4d4">برگشت از فروش:</div>
<div class="c " style="left:1702px;top:1000px;width:29px;height:25px;background:#d4d4d4"></div>
<div class="c " style="left:1652px;top:1000px;width:50px;height:25px;background:#d4d4d4"></div>
<div class="c " style="left:1601px;top:1000px;width:51px;height:25px;background:#d4d4d4"></div>
<div class="c " style="left:1511px;top:1000px;width:90px;height:25px;background:#d4d4d4"></div>
<div class="c " style="left:1418px;top:1000px;width:93px;height:25px;background:#d4d4d4"></div>
<div class="c " style="left:1375px;top:1000px;width:43px;height:25px;background:#d4d4d4"></div>
<div class="c " style="left:1326px;top:1000px;width:49px;height:25px;background:#d4d4d4"></div>
<div class="c " style="left:1247px;top:1000px;width:79px;height:25px;background:#d4d4d4"></div>
<div class="c " style="left:1197px;top:1000px;width:50px;height:25px;background:#d4d4d4"></div>
<div class="c " style="left:1146px;top:1000px;width:51px;height:25px;background:#d4d4d4"></div>
<div class="c " style="left:1056px;top:1000px;width:90px;height:25px;background:#d4d4d4"></div>
<div class="c " style="left:963px;top:1000px;width:93px;height:25px;background:#d4d4d4"></div>
<div class="c " style="left:917px;top:1000px;width:46px;height:25px;background:#d4d4d4"></div>
<div class="c " style="left:867px;top:1000px;width:50px;height:25px;background:#d4d4d4"></div>
<div class="c " style="left:777px;top:1000px;width:90px;height:25px;background:#d4d4d4"></div>
<div class="c " style="left:689px;top:1000px;width:88px;height:25px;background:#d4d4d4"></div>
<div class="c " style="left:638px;top:1000px;width:51px;height:25px;background:#d4d4d4"></div>
<div class="c " style="left:586px;top:1000px;width:52px;height:25px;background:#d4d4d4"></div>
<div class="c " style="left:487px;top:1000px;width:99px;height:25px;background:#d4d4d4"></div>
<div class="c " style="left:394px;top:1000px;width:93px;height:25px;background:#d4d4d4"></div>
<div class="c " style="left:347px;top:1000px;width:47px;height:25px;background:#d4d4d4"></div>
<div class="c " style="left:295px;top:1000px;width:52px;height:25px;background:#d4d4d4"></div>
<div class="c " style="left:201px;top:1000px;width:94px;height:25px;background:#d4d4d4"></div>
<div class="c " style="left:109px;top:1000px;width:92px;height:25px;background:#d4d4d4"></div>
<div class="c " style="left:35px;top:1000px;width:74px;height:25px;background:#d4d4d4"></div>
<div class="c nm" style="left:1731px;top:1025px;width:153px;height:24px;background:#efefef">آجر</div>
<div class="c un" style="left:1702px;top:1025px;width:29px;height:24px;background:#efefef">تن</div>
<div class="c nu" style="left:1652px;top:1025px;width:50px;height:24px;background:#efefef"></div>
<div class="c nu" style="left:1601px;top:1025px;width:51px;height:24px;background:#efefef"><b><i></i></b></div>
<div class="c nu" style="left:1511px;top:1025px;width:90px;height:24px;background:#fde2a0"><b><i></i></b></div>
<div class="c nu" style="left:1418px;top:1025px;width:93px;height:24px;background:#efefef"><b><i></i></b></div>
<div class="c nu" style="left:1375px;top:1025px;width:43px;height:24px;background:#efefef"></div>
<div class="c nu" style="left:1326px;top:1025px;width:49px;height:24px;background:#efefef"><b><i></i></b></div>
<div class="c nu" style="left:1247px;top:1025px;width:79px;height:24px;background:#efefef"><b><i></i></b></div>
<div class="c nu" style="left:1197px;top:1025px;width:50px;height:24px;background:#efefef"></div>
<div class="c nu" style="left:1146px;top:1025px;width:51px;height:24px;background:#fde2a0"><b><i></i></b></div>
<div class="c nu" style="left:1056px;top:1025px;width:90px;height:24px;background:#fde2a0"><b><i></i></b></div>
<div class="c nu" style="left:963px;top:1025px;width:93px;height:24px;background:#fde2a0"><b><i></i></b></div>
<div class="c nu" style="left:917px;top:1025px;width:46px;height:24px;background:#efefef"></div>
<div class="c nu" style="left:867px;top:1025px;width:50px;height:24px;background:#efefef"></div>
<div class="c nu" style="left:777px;top:1025px;width:90px;height:24px;background:#fde2a0"><b><i></i></b></div>
<div class="c nu" style="left:689px;top:1025px;width:88px;height:24px;background:#efefef"></div>
<div class="c nu" style="left:638px;top:1025px;width:51px;height:24px;background:#fde2a0"></div>
<div class="c nu" style="left:586px;top:1025px;width:52px;height:24px;background:#fde2a0"><b><i></i></b></div>
<div class="c nu" style="left:487px;top:1025px;width:99px;height:24px;background:#fde2a0"><b><i></i></b></div>
<div class="c nu" style="left:394px;top:1025px;width:93px;height:24px;background:#fde2a0"><b><i></i></b></div>
<div class="c nu" style="left:347px;top:1025px;width:47px;height:24px;background:#efefef"></div>
<div class="c nu neg" style="left:295px;top:1025px;width:52px;height:24px;background:#efefef"><b>(۷۷)</b></div>
<div class="c nu" style="left:201px;top:1025px;width:94px;height:24px;background:#fde2a0"><b>۱۹۹,۸۴۴,۱۵۶</b></div>
<div class="c nu neg" style="left:109px;top:1025px;width:92px;height:24px;background:#efefef"><b>(۱۵,۳۸۸)</b></div>
<div class="c st" style="left:35px;top:1025px;width:74px;height:24px;background:#efefef">تولید</div>
<div class="c nm" style="left:1731px;top:1049px;width:153px;height:24px;background:#d1e3f6">موادويژه</div>
<div class="c un" style="left:1702px;top:1049px;width:29px;height:24px;background:#d1e3f6">تن</div>
<div class="c nu" style="left:1652px;top:1049px;width:50px;height:24px;background:#d1e3f6"></div>
<div class="c nu" style="left:1601px;top:1049px;width:51px;height:24px;background:#d1e3f6"><b><i></i></b></div>
<div class="c nu" style="left:1511px;top:1049px;width:90px;height:24px;background:#fde2a0"><b><i></i></b></div>
<div class="c nu" style="left:1418px;top:1049px;width:93px;height:24px;background:#d1e3f6"><b><i></i></b></div>
<div class="c nu" style="left:1375px;top:1049px;width:43px;height:24px;background:#d1e3f6"></div>
<div class="c nu" style="left:1326px;top:1049px;width:49px;height:24px;background:#d1e3f6"><b><i></i></b></div>
<div class="c nu" style="left:1247px;top:1049px;width:79px;height:24px;background:#d1e3f6"><b><i></i></b></div>
<div class="c nu" style="left:1197px;top:1049px;width:50px;height:24px;background:#d1e3f6"></div>
<div class="c nu" style="left:1146px;top:1049px;width:51px;height:24px;background:#fde2a0"><b><i></i></b></div>
<div class="c nu" style="left:1056px;top:1049px;width:90px;height:24px;background:#fde2a0"><b><i></i></b></div>
<div class="c nu" style="left:963px;top:1049px;width:93px;height:24px;background:#fde2a0"><b><i></i></b></div>
<div class="c nu" style="left:917px;top:1049px;width:46px;height:24px;background:#d1e3f6"></div>
<div class="c nu" style="left:867px;top:1049px;width:50px;height:24px;background:#d1e3f6"></div>
<div class="c nu" style="left:777px;top:1049px;width:90px;height:24px;background:#fde2a0"><b><i></i></b></div>
<div class="c nu" style="left:689px;top:1049px;width:88px;height:24px;background:#d1e3f6"></div>
<div class="c nu" style="left:638px;top:1049px;width:51px;height:24px;background:#fde2a0"></div>
<div class="c nu" style="left:586px;top:1049px;width:52px;height:24px;background:#fde2a0"><b><i></i></b></div>
<div class="c nu" style="left:487px;top:1049px;width:99px;height:24px;background:#fde2a0"><b><i></i></b></div>
<div class="c nu" style="left:394px;top:1049px;width:93px;height:24px;background:#fde2a0"><b><i></i></b></div>
<div class="c nu" style="left:347px;top:1049px;width:47px;height:24px;background:#d1e3f6"></div>
<div class="c nu neg" style="left:295px;top:1049px;width:52px;height:24px;background:#d1e3f6"><b>(۹۲)</b></div>
<div class="c nu" style="left:201px;top:1049px;width:94px;height:24px;background:#fde2a0"><b>۱۱۶,۱۸۴,۷۸۳</b></div>
<div class="c nu neg" style="left:109px;top:1049px;width:92px;height:24px;background:#d1e3f6"><b>(۱<i></i>,۶۸۹)</b></div>
<div class="c st" style="left:35px;top:1049px;width:74px;height:24px;background:#d1e3f6">تولید</div>
<div class="c nm" style="left:1731px;top:1073px;width:153px;height:25px;background:#fde2a0">جمع برگشت از فروش</div>
<div class="c un" style="left:1702px;top:1073px;width:29px;height:25px;background:#fde2a0"></div>
<div class="c nu" style="left:1652px;top:1073px;width:50px;height:25px;background:#fde2a0"></div>
<div class="c nu" style="left:1601px;top:1073px;width:51px;height:25px;background:#fde2a0"></div>
<div class="c nu" style="left:1511px;top:1073px;width:90px;height:25px;background:#fde2a0"></div>
<div class="c nu" style="left:1418px;top:1073px;width:93px;height:25px;background:#fde2a0"></div>
<div class="c nu" style="left:1375px;top:1073px;width:43px;height:25px;background:#fde2a0"></div>
<div class="c nu" style="left:1326px;top:1073px;width:49px;height:25px;background:#fde2a0"></div>
<div class="c nu" style="left:1247px;top:1073px;width:79px;height:25px;background:#fde2a0"></div>
<div class="c nu" style="left:1197px;top:1073px;width:50px;height:25px;background:#fde2a0"></div>
<div class="c nu" style="left:1146px;top:1073px;width:51px;height:25px;background:#fde2a0"></div>
<div class="c nu" style="left:1056px;top:1073px;width:90px;height:25px;background:#fde2a0"></div>
<div class="c nu" style="left:963px;top:1073px;width:93px;height:25px;background:#fde2a0"></div>
<div class="c nu" style="left:917px;top:1073px;width:46px;height:25px;background:#fde2a0"></div>
<div class="c nu" style="left:867px;top:1073px;width:50px;height:25px;background:#fde2a0"></div>
<div class="c nu" style="left:777px;top:1073px;width:90px;height:25px;background:#fde2a0"></div>
<div class="c nu" style="left:689px;top:1073px;width:88px;height:25px;background:#fde2a0"></div>
<div class="c nu" style="left:638px;top:1073px;width:51px;height:25px;background:#fde2a0"></div>
<div class="c nu" style="left:586px;top:1073px;width:52px;height:25px;background:#fde2a0"></div>
<div class="c nu" style="left:487px;top:1073px;width:99px;height:25px;background:#fde2a0"></div>
<div class="c nu" style="left:394px;top:1073px;width:93px;height:25px;background:#fde2a0"></div>
<div class="c nu" style="left:347px;top:1073px;width:47px;height:25px;background:#fde2a0"></div>
<div class="c nu" style="left:295px;top:1073px;width:52px;height:25px;background:#fde2a0"></div>
<div class="c nu" style="left:201px;top:1073px;width:94px;height:25px;background:#fde2a0"></div>
<div class="c nu" style="left:109px;top:1073px;width:92px;height:25px;background:#fde2a0"></div>
<div class="c st" style="left:35px;top:1073px;width:74px;height:25px;background:#fde2a0"></div>
</div>
<div id="tframe"></div>
<div id="wm">@codal360.ir</div>
</body>
</html>
